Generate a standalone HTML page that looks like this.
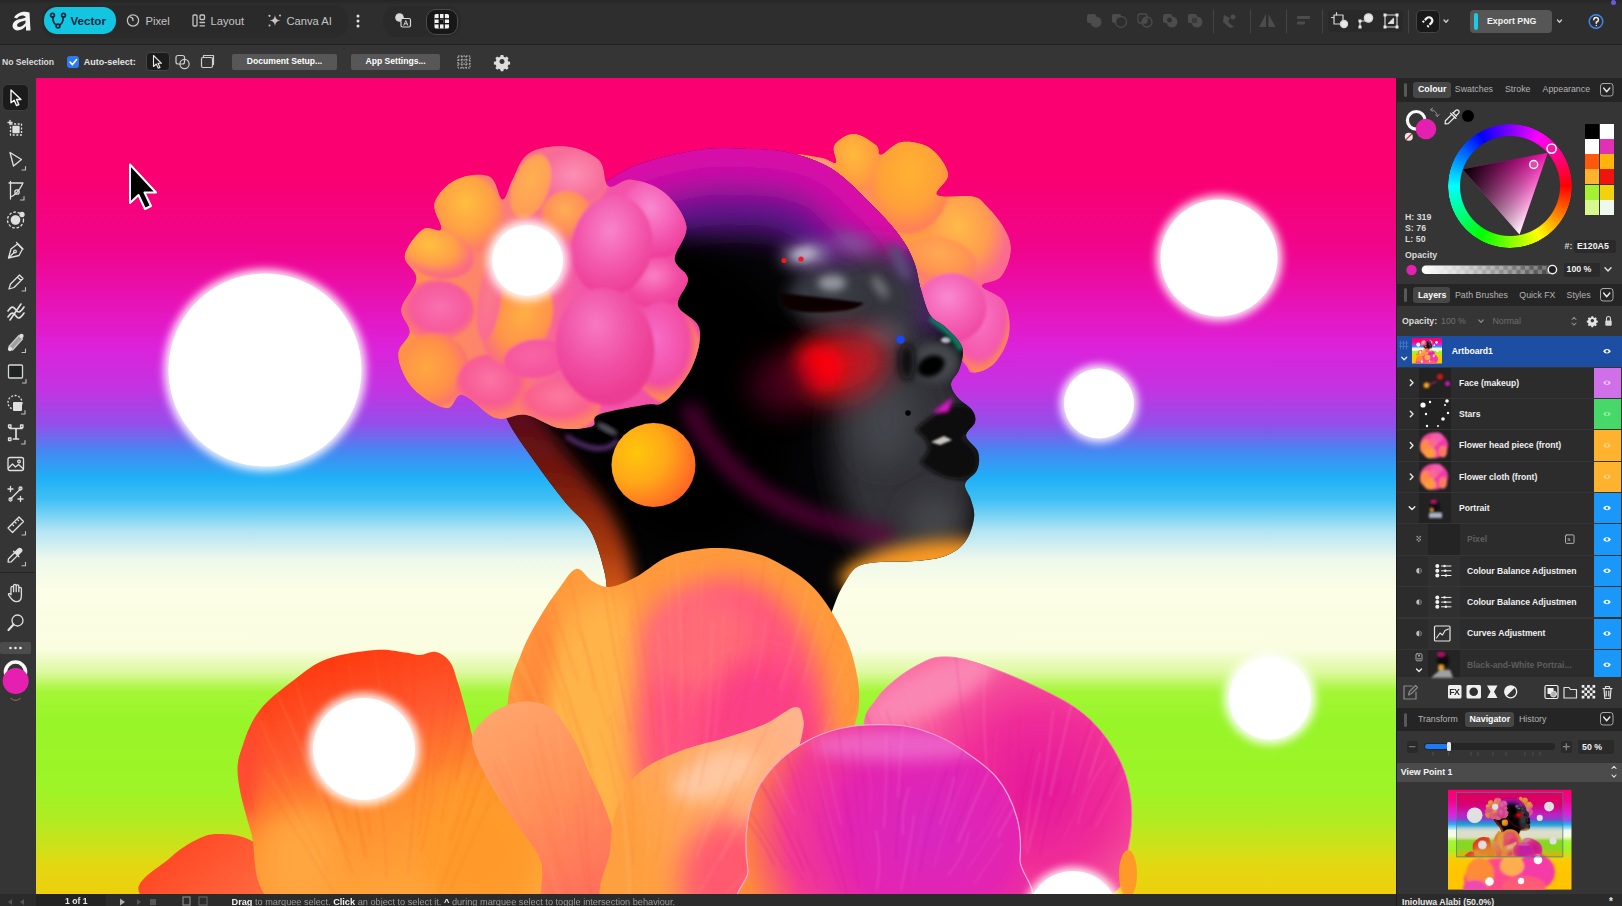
<!DOCTYPE html>
<html><head><meta charset="utf-8"><title>Affinity</title>
<style>
*{box-sizing:border-box}
html,body{margin:0;padding:0}
body{width:1622px;height:906px;overflow:hidden;position:relative;background:#343434;font-family:"Liberation Sans",sans-serif;color:#e6e6e6;font-size:9px}
.abs{position:absolute}
#art{position:absolute;left:0;top:0}
.bar1{position:absolute;left:0;top:0;width:1622px;height:45px;background:linear-gradient(#262626,#2e2e2e 5px);border-bottom:1px solid #1f1f1f}
.bar2{position:absolute;left:0;top:45px;width:1622px;height:33px;background:#353535}
.ltool{position:absolute;left:0;top:78px;width:36px;height:816px;background:#353535}
.rpanel{position:absolute;left:1396px;top:78px;width:226px;height:828px;background:#353535;border-left:1px solid #1c1c1c}
.status{position:absolute;left:0;top:894px;width:1396px;height:12px;background:#2b2b2b}
.t{position:absolute;white-space:nowrap;line-height:1}
.b{font-weight:bold}
.ph{position:absolute;left:0;width:226px;height:23px;background:#262626}
.tab{position:absolute;height:16px;border-radius:3px;background:#4a4a4a}
.grip{position:absolute;left:7px;width:3px;height:14px;background:#555;border-radius:1px}
.chev{position:absolute;left:203px;width:14px;height:13px;border:1px solid #9a9a9a;border-radius:3px}
.row{position:absolute;left:0;width:198px;height:30.4px;background:#2d2d2d}
.tag{position:absolute;left:198px;width:27px;height:30.4px}
.btn{position:absolute;background:#575757;border-radius:2px;color:#fff;font-weight:bold;font-size:8.6px;text-align:center}
.dk{position:absolute;background:#262626;border-radius:2px}

</style></head><body>
<svg id="art" width="1622" height="906" viewBox="0 0 1622 906">
<defs>
<clipPath id="cv"><rect x="36" y="78" width="1360" height="816"/></clipPath>
<linearGradient id="bg" x1="0" y1="78" x2="0" y2="894" gradientUnits="userSpaceOnUse">
<stop offset="0" stop-color="#fb0070"/><stop offset=".113" stop-color="#fb0070"/><stop offset=".21" stop-color="#f0058c"/>
<stop offset=".272" stop-color="#e812b4"/><stop offset=".33" stop-color="#dc22da"/><stop offset=".382" stop-color="#c234e2"/>
<stop offset=".425" stop-color="#9250ea"/><stop offset=".458" stop-color="#4488f2"/><stop offset=".49" stop-color="#20b0f6"/>
<stop offset=".517" stop-color="#40c0f4"/><stop offset=".554" stop-color="#b0e4f4"/><stop offset=".59" stop-color="#eef8ec"/>
<stop offset=".627" stop-color="#fcfee6"/><stop offset=".70" stop-color="#fafde0"/><stop offset=".728" stop-color="#ddf9a0"/>
<stop offset=".752" stop-color="#a4f636"/><stop offset=".79" stop-color="#98f528"/><stop offset=".8725" stop-color="#9ef426"/>
<stop offset=".909" stop-color="#b0ec22"/><stop offset=".94" stop-color="#cce21a"/><stop offset=".9645" stop-color="#e2d812"/><stop offset="1" stop-color="#eed00c"/>
</linearGradient>
<filter id="b05" filterUnits="userSpaceOnUse" x="0" y="500" width="1400" height="420"><feGaussianBlur stdDeviation="1"/></filter>
<filter id="b1" x="-20%" y="-20%" width="140%" height="140%"><feGaussianBlur stdDeviation="1"/></filter>
<filter id="b15" x="-20%" y="-20%" width="140%" height="140%"><feGaussianBlur stdDeviation="1.5"/></filter>
<filter id="b2" x="-20%" y="-20%" width="140%" height="140%"><feGaussianBlur stdDeviation="2"/></filter>
<filter id="b4" x="-60%" y="-60%" width="220%" height="220%"><feGaussianBlur stdDeviation="4"/></filter>
<filter id="b8" x="-120%" y="-120%" width="340%" height="340%"><feGaussianBlur stdDeviation="8"/></filter>
<filter id="b14" x="-150%" y="-150%" width="400%" height="400%"><feGaussianBlur stdDeviation="14"/></filter>
<filter id="u2" filterUnits="userSpaceOnUse" x="400" y="60" width="700" height="700"><feGaussianBlur stdDeviation="2"/></filter>
<filter id="u8" filterUnits="userSpaceOnUse" x="400" y="60" width="700" height="700"><feGaussianBlur stdDeviation="8"/></filter>
<filter id="u14" filterUnits="userSpaceOnUse" x="400" y="60" width="700" height="700"><feGaussianBlur stdDeviation="14"/></filter>
<radialGradient id="gPink" cx=".45" cy=".4" r=".65"><stop offset="0" stop-color="#f98ac8"/><stop offset=".55" stop-color="#f655ae"/><stop offset="1" stop-color="#f23c98"/></radialGradient>
<radialGradient id="gPink2" cx=".5" cy=".45" r=".6"><stop offset="0" stop-color="#f774c0"/><stop offset=".6" stop-color="#f34aa6"/><stop offset="1" stop-color="#fb6a7c"/></radialGradient>
<radialGradient id="gPinkO" cx=".4" cy=".35" r=".75"><stop offset="0" stop-color="#f66cbc"/><stop offset=".6" stop-color="#f650a0"/><stop offset="1" stop-color="#ff9440"/></radialGradient>
<radialGradient id="gOr" cx=".45" cy=".4" r=".7"><stop offset="0" stop-color="#ffb63a"/><stop offset=".6" stop-color="#ff9a48"/><stop offset="1" stop-color="#fb6c7a"/></radialGradient>
<radialGradient id="gOr2" cx=".4" cy=".4" r=".7"><stop offset="0" stop-color="#ffae34"/><stop offset=".7" stop-color="#ff9540"/><stop offset="1" stop-color="#ff7f5c"/></radialGradient>
<radialGradient id="gPeach" cx=".45" cy=".4" r=".7"><stop offset="0" stop-color="#ffa060"/><stop offset=".6" stop-color="#fc7e84"/><stop offset="1" stop-color="#f860a4"/></radialGradient>
<radialGradient id="gBall" cx=".3" cy=".35" r=".8"><stop offset="0" stop-color="#ffc60a"/><stop offset=".45" stop-color="#ffa818"/><stop offset="1" stop-color="#ff5a28"/></radialGradient>
<linearGradient id="gHeadTop" x1="760" y1="140" x2="700" y2="330" gradientUnits="userSpaceOnUse"><stop offset="0" stop-color="#d808a8"/><stop offset=".25" stop-color="#a00a98"/><stop offset=".55" stop-color="#3a0a50"/><stop offset=".8" stop-color="#08040c"/><stop offset="1" stop-color="#000"/></linearGradient>
<linearGradient id="gShoulder" x1="520" y1="700" x2="870" y2="700" gradientUnits="userSpaceOnUse"><stop offset="0" stop-color="#ff8c3c"/><stop offset=".18" stop-color="#ffae44"/><stop offset=".4" stop-color="#ff8060"/><stop offset=".6" stop-color="#ff5680"/><stop offset=".82" stop-color="#ff6a6c"/><stop offset="1" stop-color="#ff9a30"/></linearGradient>
<linearGradient id="gRedPetal" x1="360" y1="650" x2="440" y2="894" gradientUnits="userSpaceOnUse"><stop offset="0" stop-color="#ff3a10"/><stop offset=".3" stop-color="#ff5a30"/><stop offset=".6" stop-color="#ff9030"/><stop offset="1" stop-color="#ffa83c"/></linearGradient>
<linearGradient id="gSmallL" x1="200" y1="830" x2="260" y2="900" gradientUnits="userSpaceOnUse"><stop offset="0" stop-color="#ff4a26"/><stop offset="1" stop-color="#ff6a40"/></linearGradient>
<linearGradient id="gMidPetal" x1="500" y1="700" x2="620" y2="894" gradientUnits="userSpaceOnUse"><stop offset="0" stop-color="#ffa66c"/><stop offset=".5" stop-color="#ff8f58"/><stop offset="1" stop-color="#ff6c5c"/></linearGradient>
<linearGradient id="gPeachPetal" x1="620" y1="800" x2="800" y2="720" gradientUnits="userSpaceOnUse"><stop offset="0" stop-color="#ffa040"/><stop offset=".5" stop-color="#ffb070"/><stop offset="1" stop-color="#ffb48c"/></linearGradient>
<radialGradient id="gMag" cx="930" cy="830" r="190" gradientUnits="userSpaceOnUse"><stop offset="0" stop-color="#d826c0"/><stop offset=".45" stop-color="#e424b0"/><stop offset=".75" stop-color="#f43c90"/><stop offset="1" stop-color="#ff8a3c"/></radialGradient>
<radialGradient id="gBackPink" cx="1040" cy="790" r="150" gradientUnits="userSpaceOnUse"><stop offset="0" stop-color="#e4189c"/><stop offset=".5" stop-color="#f02c98"/><stop offset="1" stop-color="#fa6a9c"/></radialGradient>
<linearGradient id="gRF" x1="0" y1="134" x2="0" y2="375" gradientUnits="userSpaceOnUse"><stop offset="0" stop-color="#ffa838"/><stop offset=".55" stop-color="#ff9848"/><stop offset=".68" stop-color="#f668a8"/><stop offset="1" stop-color="#f65cb0"/></linearGradient>
<linearGradient id="gLF" x1="398" y1="0" x2="700" y2="0" gradientUnits="userSpaceOnUse"><stop offset="0" stop-color="#ff9a44"/><stop offset=".4" stop-color="#fb7a80"/><stop offset=".6" stop-color="#f458a8"/><stop offset="1" stop-color="#f24ca6"/></linearGradient>
<linearGradient id="gNeck" x1="0" y1="405" x2="0" y2="610" gradientUnits="userSpaceOnUse"><stop offset="0" stop-color="#5a0a20"/><stop offset=".35" stop-color="#7a1a0c"/><stop offset=".7" stop-color="#b03c10"/><stop offset="1" stop-color="#f06a1c"/></linearGradient>

</defs>
<g id="artg" clip-path="url(#cv)">
<rect x="36" y="78" width="1360" height="816" fill="url(#bg)"/>
<circle cx="265" cy="370" r="101.0" fill="#fff" filter="url(#b4)" opacity=".9"/><circle cx="265" cy="370" r="96.5" fill="#fff"/>
<circle cx="1219" cy="258" r="63.0" fill="#fff" filter="url(#b4)" opacity=".9"/><circle cx="1219" cy="258" r="58.5" fill="#fff"/>
<circle cx="1099" cy="403.5" r="39" fill="#fff" filter="url(#b4)" opacity=".9"/><circle cx="1099" cy="403.5" r="35" fill="#fff"/>
<circle cx="1270" cy="698.5" r="46" fill="#fff" filter="url(#b4)" opacity=".9"/><circle cx="1270" cy="698.5" r="41" fill="#fff"/>
<clipPath id="rfc"><path d="M796.0 158.0 C791.1 150.8 814.7 157.2 821.6 158.0 C828.6 158.9 833.8 165.1 836.0 162.8 C838.3 160.6 831.4 150.2 834.4 145.2 C837.5 140.2 846.4 134.0 853.6 134.0 C860.9 134.0 871.3 141.6 876.1 145.2 C880.8 148.8 876.4 155.4 880.9 154.8 C885.3 154.3 893.1 143.1 901.7 142.0 C910.3 140.9 922.4 142.9 930.5 148.4 C938.5 154.0 947.0 166.0 948.1 174.0 C949.2 182.1 932.7 191.0 936.9 194.9 C941.1 198.7 963.8 194.8 972.1 196.5 C980.4 198.1 979.4 198.9 984.9 204.5 C990.5 210.0 999.7 220.4 1004.1 228.5 C1008.6 236.5 1011.1 242.6 1010.5 250.9 C1010.0 259.2 1005.9 270.4 1000.9 276.5 C995.9 282.6 981.2 281.7 981.7 286.1 C982.3 290.6 999.4 293.8 1004.1 302.1 C1008.9 310.4 1010.6 323.6 1008.9 334.1 C1007.3 344.7 1000.9 356.3 994.5 363.0 C988.2 369.6 978.0 373.1 972.1 372.6 C966.3 372.0 973.4 372.3 960.9 359.8 C948.4 347.2 919.2 327.7 900.0 300.0 C880.8 272.3 868.0 224.6 850.0 200.0 C832.0 175.4 800.9 165.3 796.0 158.0Z"/></clipPath>
<path d="M796.0 158.0 C791.1 150.8 814.7 157.2 821.6 158.0 C828.6 158.9 833.8 165.1 836.0 162.8 C838.3 160.6 831.4 150.2 834.4 145.2 C837.5 140.2 846.4 134.0 853.6 134.0 C860.9 134.0 871.3 141.6 876.1 145.2 C880.8 148.8 876.4 155.4 880.9 154.8 C885.3 154.3 893.1 143.1 901.7 142.0 C910.3 140.9 922.4 142.9 930.5 148.4 C938.5 154.0 947.0 166.0 948.1 174.0 C949.2 182.1 932.7 191.0 936.9 194.9 C941.1 198.7 963.8 194.8 972.1 196.5 C980.4 198.1 979.4 198.9 984.9 204.5 C990.5 210.0 999.7 220.4 1004.1 228.5 C1008.6 236.5 1011.1 242.6 1010.5 250.9 C1010.0 259.2 1005.9 270.4 1000.9 276.5 C995.9 282.6 981.2 281.7 981.7 286.1 C982.3 290.6 999.4 293.8 1004.1 302.1 C1008.9 310.4 1010.6 323.6 1008.9 334.1 C1007.3 344.7 1000.9 356.3 994.5 363.0 C988.2 369.6 978.0 373.1 972.1 372.6 C966.3 372.0 973.4 372.3 960.9 359.8 C948.4 347.2 919.2 327.7 900.0 300.0 C880.8 272.3 868.0 224.6 850.0 200.0 C832.0 175.4 800.9 165.3 796.0 158.0Z" fill="url(#gRF)"/>
<g clip-path="url(#rfc)"><g filter="url(#b15)">
<radialGradient id="pg1" cx="0.45" cy="0.4" r=".62"><stop offset="0" stop-color="#ffa47c"/><stop offset="1" stop-color="#ff8e70"/></radialGradient>
<ellipse cx="820.0" cy="170.8" rx="27.2" ry="14.1" fill="url(#pg1)" transform="rotate(-10 820.0 170.8)"/>
<radialGradient id="pg2" cx="0.45" cy="0.35" r=".62"><stop offset="0" stop-color="#ffba3a"/><stop offset="0.6" stop-color="#ffa23e"/><stop offset="1" stop-color="#ff8850"/></radialGradient>
<ellipse cx="857.5" cy="163.8" rx="25.0" ry="32.0" fill="url(#pg2)" transform="rotate(-8 857.5 163.8)"/>
<radialGradient id="pg3" cx="0.45" cy="0.4" r=".62"><stop offset="0" stop-color="#ff9a58"/><stop offset="1" stop-color="#ff8460"/></radialGradient>
<ellipse cx="876.1" cy="215.7" rx="16.0" ry="28.8" fill="url(#pg3)" transform="rotate(-25 876.1 215.7)"/>
<radialGradient id="pg4" cx="0.4" cy="0.35" r=".62"><stop offset="0" stop-color="#f874c2"/><stop offset="0.74" stop-color="#f558ac"/><stop offset="1" stop-color="#ff9040"/></radialGradient>
<ellipse cx="984.9" cy="330.9" rx="26.3" ry="44.2" fill="url(#pg4)" transform="rotate(5 984.9 330.9)"/>
<radialGradient id="pg5" cx="0.4" cy="0.3" r=".62"><stop offset="0" stop-color="#ffba48"/><stop offset="0.6" stop-color="#ff9c50"/><stop offset="1" stop-color="#fb6a90"/></radialGradient>
<ellipse cx="972.1" cy="241.3" rx="39.7" ry="47.4" fill="url(#pg5)" transform="rotate(-20 972.1 241.3)"/>
<radialGradient id="pg6" cx="0.45" cy="0.35" r=".62"><stop offset="0" stop-color="#ffb232"/><stop offset="0.6" stop-color="#ffa238"/><stop offset="1" stop-color="#ff8058"/></radialGradient>
<ellipse cx="910.6" cy="186.8" rx="39.1" ry="47.4" fill="url(#pg6)" transform="rotate(12 910.6 186.8)"/>
<radialGradient id="pg7" cx="0.45" cy="0.35" r=".62"><stop offset="0" stop-color="#ffaa52"/><stop offset="0.6" stop-color="#ff9650"/><stop offset="1" stop-color="#fc7a70"/></radialGradient>
<ellipse cx="941.7" cy="261.1" rx="35.2" ry="23.1" fill="url(#pg7)" transform="rotate(12 941.7 261.1)"/>
<radialGradient id="pg8" cx="0.45" cy="0.35" r=".62"><stop offset="0" stop-color="#f98ad0"/><stop offset="0.6" stop-color="#f560b4"/><stop offset="1" stop-color="#f04aa4"/></radialGradient>
<ellipse cx="951.3" cy="307.9" rx="35.2" ry="34.6" fill="url(#pg8)" transform="rotate(0 951.3 307.9)"/>
</g></g>
<path id="head" d="M600.0 186.0 C614.7 176.6 622.7 170.2 640.0 164.0 C657.3 157.8 681.5 152.6 700.0 150.0 C718.5 147.4 731.4 148.5 747.0 149.0 C762.6 149.5 775.3 149.5 790.0 153.0 C804.7 156.5 818.3 160.5 832.0 169.0 C845.7 177.5 857.4 190.6 869.0 202.0 C880.6 213.4 891.2 224.6 899.0 235.0 C906.8 245.4 910.2 252.5 914.0 262.0 C917.8 271.5 918.2 280.8 921.0 290.0 C923.8 299.2 926.0 308.8 930.0 315.0 C934.0 321.2 939.1 321.7 944.0 326.0 C948.9 330.3 954.7 335.5 958.0 340.0 C961.3 344.5 962.8 346.8 963.0 352.0 C963.2 357.2 961.1 364.5 959.0 370.0 C956.9 375.5 951.2 379.1 951.0 384.0 C950.8 388.9 954.4 393.5 958.0 398.0 C961.6 402.5 969.1 405.8 972.0 410.0 C974.9 414.2 976.0 417.5 975.0 422.0 C974.0 426.5 965.5 430.8 966.0 436.0 C966.5 441.2 976.1 446.1 978.0 452.0 C979.9 457.9 979.3 464.5 977.0 470.0 C974.7 475.5 966.0 478.8 965.0 484.0 C964.0 489.2 969.4 494.1 971.0 500.0 C972.6 505.9 975.0 510.7 974.0 518.0 C973.0 525.3 970.0 535.4 965.0 542.0 C960.0 548.6 953.7 552.7 945.0 556.0 C936.3 559.3 926.3 560.0 915.0 561.0 C903.7 562.0 890.1 561.0 880.0 562.0 C869.9 563.0 863.2 563.2 857.0 567.0 C850.8 570.8 847.8 577.8 844.0 584.0 C840.2 590.2 838.1 595.0 835.0 603.0 C831.9 611.0 829.5 618.4 826.0 630.0 C822.5 641.6 836.8 659.6 815.0 670.0 C793.2 680.4 734.7 693.5 700.0 690.0 C665.3 686.5 630.9 665.6 615.0 650.0 C599.1 634.4 609.9 613.9 608.0 600.0 C606.1 586.1 607.1 582.1 604.0 570.0 C600.9 557.9 596.8 541.8 590.0 530.0 C583.2 518.2 574.5 513.8 565.0 502.0 C555.5 490.2 545.2 476.7 535.0 462.0 C524.8 447.3 513.3 432.9 506.0 417.0 C498.7 401.1 494.6 388.5 493.0 370.0 C491.4 351.5 492.3 328.7 497.0 310.0 C501.7 291.3 509.9 277.9 520.0 262.0 C530.1 246.1 541.1 231.2 555.0 218.0 C568.9 204.8 585.3 195.4 600.0 186.0Z" fill="#040406"/>
<clipPath id="headc"><path d="M600.0 186.0 C614.7 176.6 622.7 170.2 640.0 164.0 C657.3 157.8 681.5 152.6 700.0 150.0 C718.5 147.4 731.4 148.5 747.0 149.0 C762.6 149.5 775.3 149.5 790.0 153.0 C804.7 156.5 818.3 160.5 832.0 169.0 C845.7 177.5 857.4 190.6 869.0 202.0 C880.6 213.4 891.2 224.6 899.0 235.0 C906.8 245.4 910.2 252.5 914.0 262.0 C917.8 271.5 918.2 280.8 921.0 290.0 C923.8 299.2 926.0 308.8 930.0 315.0 C934.0 321.2 939.1 321.7 944.0 326.0 C948.9 330.3 954.7 335.5 958.0 340.0 C961.3 344.5 962.8 346.8 963.0 352.0 C963.2 357.2 961.1 364.5 959.0 370.0 C956.9 375.5 951.2 379.1 951.0 384.0 C950.8 388.9 954.4 393.5 958.0 398.0 C961.6 402.5 969.1 405.8 972.0 410.0 C974.9 414.2 976.0 417.5 975.0 422.0 C974.0 426.5 965.5 430.8 966.0 436.0 C966.5 441.2 976.1 446.1 978.0 452.0 C979.9 457.9 979.3 464.5 977.0 470.0 C974.7 475.5 966.0 478.8 965.0 484.0 C964.0 489.2 969.4 494.1 971.0 500.0 C972.6 505.9 975.0 510.7 974.0 518.0 C973.0 525.3 970.0 535.4 965.0 542.0 C960.0 548.6 953.7 552.7 945.0 556.0 C936.3 559.3 926.3 560.0 915.0 561.0 C903.7 562.0 890.1 561.0 880.0 562.0 C869.9 563.0 863.2 563.2 857.0 567.0 C850.8 570.8 847.8 577.8 844.0 584.0 C840.2 590.2 838.1 595.0 835.0 603.0 C831.9 611.0 829.5 618.4 826.0 630.0 C822.5 641.6 836.8 659.6 815.0 670.0 C793.2 680.4 734.7 693.5 700.0 690.0 C665.3 686.5 630.9 665.6 615.0 650.0 C599.1 634.4 609.9 613.9 608.0 600.0 C606.1 586.1 607.1 582.1 604.0 570.0 C600.9 557.9 596.8 541.8 590.0 530.0 C583.2 518.2 574.5 513.8 565.0 502.0 C555.5 490.2 545.2 476.7 535.0 462.0 C524.8 447.3 513.3 432.9 506.0 417.0 C498.7 401.1 494.6 388.5 493.0 370.0 C491.4 351.5 492.3 328.7 497.0 310.0 C501.7 291.3 509.9 277.9 520.0 262.0 C530.1 246.1 541.1 231.2 555.0 218.0 C568.9 204.8 585.3 195.4 600.0 186.0Z"/></clipPath>
<g clip-path="url(#headc)">
<path d="M540.0 240.0 C550.4 230.6 582.7 199.2 600.0 186.0 C617.3 172.8 622.7 170.2 640.0 164.0 C657.3 157.8 681.5 152.6 700.0 150.0 C718.5 147.4 731.4 148.5 747.0 149.0 C762.6 149.5 775.3 149.5 790.0 153.0 C804.7 156.5 818.3 160.5 832.0 169.0 C845.7 177.5 858.4 191.8 869.0 202.0 C879.6 212.2 886.6 219.7 893.0 228.0 C899.4 236.3 903.7 246.2 906.0 250.0" stroke="#5a1488" stroke-width="170" fill="none" filter="url(#u14)" stroke-linecap="round"/>
<path d="M540.0 240.0 C550.4 230.6 582.7 199.2 600.0 186.0 C617.3 172.8 622.7 170.2 640.0 164.0 C657.3 157.8 681.5 152.6 700.0 150.0 C718.5 147.4 731.4 148.5 747.0 149.0 C762.6 149.5 775.3 149.5 790.0 153.0 C804.7 156.5 818.3 160.5 832.0 169.0 C845.7 177.5 858.4 191.8 869.0 202.0 C879.6 212.2 886.6 219.7 893.0 228.0 C899.4 236.3 903.7 246.2 906.0 250.0" stroke="#c20ea4" stroke-width="92" fill="none" filter="url(#u14)" stroke-linecap="butt"/>
<path d="M540.0 240.0 C550.4 230.6 582.7 199.2 600.0 186.0 C617.3 172.8 622.7 170.2 640.0 164.0 C657.3 157.8 681.5 152.6 700.0 150.0 C718.5 147.4 731.4 148.5 747.0 149.0 C762.6 149.5 775.3 149.5 790.0 153.0 C804.7 156.5 818.3 160.5 832.0 169.0 C845.7 177.5 858.4 191.8 869.0 202.0 C879.6 212.2 886.6 219.7 893.0 228.0 C899.4 236.3 903.7 246.2 906.0 250.0" stroke="#d810a8" stroke-width="36" fill="none" filter="url(#u8)" stroke-linecap="butt"/>
<ellipse cx="660" cy="330" rx="150" ry="90" fill="#000" filter="url(#b14)" transform="rotate(25 660 330)"/>
<ellipse cx="560" cy="300" rx="80" ry="90" fill="#000" filter="url(#b14)"/>
<ellipse cx="905" cy="450" rx="72" ry="130" fill="#303238" filter="url(#b14)" transform="rotate(-6 905 450)"/>
<ellipse cx="870" cy="300" rx="58" ry="50" fill="#34363e" filter="url(#b14)"/><ellipse cx="825" cy="296" rx="36" ry="26" fill="#393b43" filter="url(#b8)"/>
<ellipse cx="806" cy="255" rx="24" ry="10" fill="#9a92ae" filter="url(#b8)" transform="rotate(-8 806 255)"/><ellipse cx="804" cy="254" rx="12" ry="5" fill="#c0b8d0" filter="url(#b4)" transform="rotate(-8 804 254)"/><ellipse cx="852" cy="243" rx="22" ry="8" fill="#8258a0" filter="url(#b8)" transform="rotate(12 852 243)"/>
<ellipse cx="880" cy="287" rx="5" ry="13" fill="#74767e" filter="url(#b4)" transform="rotate(-35 880 287)"/><ellipse cx="900" cy="262" rx="7" ry="20" fill="#5a4a78" filter="url(#b4)" transform="rotate(-25 900 262)"/>
<ellipse cx="832" cy="283" rx="14" ry="8" fill="#9496a0" filter="url(#b4)"/>
<ellipse cx="885" cy="335" rx="22" ry="14" fill="#4e5058" filter="url(#b8)"/>
<ellipse cx="885" cy="420" rx="30" ry="45" fill="#43454b" filter="url(#b14)"/>
<ellipse cx="935" cy="520" rx="26" ry="22" fill="#46484e" filter="url(#b14)"/>
<ellipse cx="690" cy="420" rx="100" ry="130" fill="#000" filter="url(#b14)"/>
<path d="M782 295 C795 296 830 300 860 304 C850 311 810 313 790 308 C785 305 782 300 782 295Z" fill="#0c0006" stroke="#0c0006" stroke-width="3" filter="url(#b1)"/>
<ellipse cx="838" cy="366" rx="52" ry="34" fill="#d81420" filter="url(#b14)" opacity=".85" transform="rotate(-15 838 366)"/>
<ellipse cx="820" cy="367" rx="24" ry="22" fill="#ff0008" filter="url(#b8)"/>
<ellipse cx="780" cy="385" rx="30" ry="30" fill="#50001c" filter="url(#b14)" opacity=".8"/>
<ellipse cx="936" cy="362" rx="24" ry="20" fill="#45474e" filter="url(#b4)"/><ellipse cx="931" cy="366" rx="14" ry="10" fill="#010102" filter="url(#b2)" transform="rotate(-25 931 366)"/>
<ellipse cx="907" cy="362" rx="8" ry="18" fill="#08080c" filter="url(#b4)"/>
<ellipse cx="946" cy="340" rx="5" ry="3" fill="#b8bac0" filter="url(#b1)"/>
<path d="M931 317 C942 326 955 334 962 350" stroke="#0a7a5e" stroke-width="8" fill="none" filter="url(#u2)"/>
<path d="M915 430 C935 412 955 398 972 408 C982 418 975 432 962 438 C975 446 984 460 974 474 C960 486 935 476 920 462 C930 452 935 444 915 430Z" fill="#0c0c10" filter="url(#b2)"/>
<path d="M932 413 L953 397 L948 412Z" fill="#e614d0" filter="url(#b2)"/>
<path d="M931 442 L944 436 L952 440 L940 445Z" fill="#c8c4c0" filter="url(#b1)"/>
<path d="M688 405 C703 440 730 470 760 492 C800 518 850 530 892 536" stroke="#62053c" stroke-width="18" fill="none" filter="url(#u8)" opacity=".8"/><path d="M566 436 C590 452 608 452 618 440" stroke="#6a3a88" stroke-width="5" fill="none" filter="url(#u2)" opacity=".8"/><ellipse cx="607" cy="429" rx="12" ry="3.500" fill="#55555f" filter="url(#b2)" transform="rotate(28 607 429)"/>
<ellipse cx="925" cy="568" rx="86" ry="26" fill="#f89820" filter="url(#b8)" transform="rotate(-8 925 568)"/>
<path d="M500 405 C515 440 540 470 565 502 C590 530 604 565 606 610" stroke="url(#gNeck)" stroke-width="62" fill="none" filter="url(#u8)" opacity=".95"/>

</g>
<circle cx="784" cy="260.5" r="2.6" fill="#f01818"/><circle cx="801" cy="259" r="2.6" fill="#f01818"/>
<circle cx="900.5" cy="339.5" r="4.2" fill="#1848f0"/><circle cx="908" cy="413" r="2.8" fill="#000"/>
<circle cx="653.5" cy="465" r="42" fill="url(#gBall)"/>
<clipPath id="lfc"><path d="M529.0 153.2 C538.2 147.4 553.4 145.4 565.4 146.6 C577.5 147.7 591.1 152.9 598.5 159.8 C606.0 166.7 602.7 182.8 608.5 186.3 C614.2 189.7 621.9 178.5 631.7 179.7 C641.4 180.8 655.3 184.9 664.8 192.9 C674.2 200.9 684.6 214.5 686.3 226.0 C688.0 237.5 674.4 250.0 674.7 259.1 C675.0 268.3 687.4 271.0 687.9 279.0 C688.5 287.0 676.0 296.9 678.0 305.5 C680.0 314.1 697.2 317.8 699.5 328.7 C701.8 339.6 697.3 355.8 691.3 368.4 C685.2 381.0 672.8 395.2 664.8 401.5 C656.7 407.8 656.4 402.5 644.9 404.8 C633.4 407.1 607.7 411.0 598.5 414.8 C589.4 418.5 598.8 424.1 591.9 426.4 C585.0 428.7 570.3 430.0 558.8 428.0 C547.3 426.0 536.6 416.5 525.7 414.8 C514.8 413.0 506.8 421.5 495.9 418.1 C485.0 414.6 471.4 396.6 462.8 394.9 C454.2 393.2 454.8 409.3 446.2 408.1 C437.6 407.0 421.4 397.5 413.1 388.3 C404.8 379.1 398.8 364.9 398.2 355.2 C397.6 345.4 409.2 340.0 409.8 332.0 C410.4 324.0 400.4 318.0 401.5 308.8 C402.7 299.6 415.8 288.2 416.4 279.0 C417.0 269.8 403.7 264.4 404.8 255.8 C406.0 247.2 416.7 233.9 423.0 229.3 C429.4 224.7 439.2 233.9 441.3 229.3 C443.3 224.7 432.1 211.5 434.6 202.8 C437.2 194.2 446.7 184.3 456.2 179.7 C465.6 175.1 481.2 172.9 489.3 176.4 C497.3 179.8 498.5 199.0 502.5 199.5 C506.5 200.1 507.9 187.7 512.5 179.7 C517.0 171.6 519.8 158.9 529.0 153.2Z"/></clipPath>
<path d="M529.0 153.2 C538.2 147.4 553.4 145.4 565.4 146.6 C577.5 147.7 591.1 152.9 598.5 159.8 C606.0 166.7 602.7 182.8 608.5 186.3 C614.2 189.7 621.9 178.5 631.7 179.7 C641.4 180.8 655.3 184.9 664.8 192.9 C674.2 200.9 684.6 214.5 686.3 226.0 C688.0 237.5 674.4 250.0 674.7 259.1 C675.0 268.3 687.4 271.0 687.9 279.0 C688.5 287.0 676.0 296.9 678.0 305.5 C680.0 314.1 697.2 317.8 699.5 328.7 C701.8 339.6 697.3 355.8 691.3 368.4 C685.2 381.0 672.8 395.2 664.8 401.5 C656.7 407.8 656.4 402.5 644.9 404.8 C633.4 407.1 607.7 411.0 598.5 414.8 C589.4 418.5 598.8 424.1 591.9 426.4 C585.0 428.7 570.3 430.0 558.8 428.0 C547.3 426.0 536.6 416.5 525.7 414.8 C514.8 413.0 506.8 421.5 495.9 418.1 C485.0 414.6 471.4 396.6 462.8 394.9 C454.2 393.2 454.8 409.3 446.2 408.1 C437.6 407.0 421.4 397.5 413.1 388.3 C404.8 379.1 398.8 364.9 398.2 355.2 C397.6 345.4 409.2 340.0 409.8 332.0 C410.4 324.0 400.4 318.0 401.5 308.8 C402.7 299.6 415.8 288.2 416.4 279.0 C417.0 269.8 403.7 264.4 404.8 255.8 C406.0 247.2 416.7 233.9 423.0 229.3 C429.4 224.7 439.2 233.9 441.3 229.3 C443.3 224.7 432.1 211.5 434.6 202.8 C437.2 194.2 446.7 184.3 456.2 179.7 C465.6 175.1 481.2 172.9 489.3 176.4 C497.3 179.8 498.5 199.0 502.5 199.5 C506.5 200.1 507.9 187.7 512.5 179.7 C517.0 171.6 519.8 158.9 529.0 153.2Z" fill="url(#gLF)"/>
<g clip-path="url(#lfc)"><g filter="url(#b15)">
<radialGradient id="pg9" cx="0.6" cy="0.45" r=".62"><stop offset="0" stop-color="#fb90b4"/><stop offset="0.6" stop-color="#f86a98"/><stop offset="1" stop-color="#fb7a80"/></radialGradient>
<ellipse cx="565.4" cy="179.7" rx="44.7" ry="34.8" fill="url(#pg9)" transform="rotate(-10 565.4 179.7)"/>
<radialGradient id="pg10" cx="0.45" cy="0.4" r=".62"><stop offset="0" stop-color="#ffb050"/><stop offset="1" stop-color="#ff9a58"/></radialGradient>
<ellipse cx="530.7" cy="186.3" rx="18.2" ry="33.1" fill="url(#pg10)" transform="rotate(20 530.7 186.3)"/>
<radialGradient id="pg11" cx="0.5" cy="0.35" r=".62"><stop offset="0" stop-color="#ffbe40"/><stop offset="0.6" stop-color="#ffa044"/><stop offset="1" stop-color="#fd7a6c"/></radialGradient>
<ellipse cx="467.7" cy="214.4" rx="34.8" ry="39.1" fill="url(#pg11)" transform="rotate(-10 467.7 214.4)"/>
<radialGradient id="pg12" cx="0.35" cy="0.35" r=".62"><stop offset="0" stop-color="#ffc040"/><stop offset="0.6" stop-color="#ffa048"/><stop offset="1" stop-color="#fb6a84"/></radialGradient>
<ellipse cx="437.9" cy="254.2" rx="36.4" ry="23.8" fill="url(#pg12)" transform="rotate(15 437.9 254.2)"/>
<radialGradient id="pg13" cx="0.55" cy="0.45" r=".62"><stop offset="0" stop-color="#f970b0"/><stop offset="0.6" stop-color="#f75a9c"/><stop offset="1" stop-color="#ff8a58"/></radialGradient>
<ellipse cx="436.3" cy="310.5" rx="38.1" ry="30.5" fill="url(#pg13)" transform="rotate(0 436.3 310.5)"/>
<radialGradient id="pg14" cx="0.4" cy="0.5" r=".62"><stop offset="0" stop-color="#ffa840"/><stop offset="0.6" stop-color="#ff9048"/><stop offset="1" stop-color="#fb6a7c"/></radialGradient>
<ellipse cx="433.0" cy="370.1" rx="36.4" ry="37.1" fill="url(#pg14)" transform="rotate(20 433.0 370.1)"/>
<radialGradient id="pg15" cx="0.45" cy="0.4" r=".62"><stop offset="0" stop-color="#fa74a4"/><stop offset="0.6" stop-color="#f85a94"/><stop offset="1" stop-color="#ff8a58"/></radialGradient>
<ellipse cx="492.6" cy="386.6" rx="37.1" ry="31.8" fill="url(#pg15)" transform="rotate(10 492.6 386.6)"/>
<radialGradient id="pg16" cx="0.5" cy="0.3" r=".62"><stop offset="0" stop-color="#fb78a0"/><stop offset="0.6" stop-color="#f9608c"/><stop offset="1" stop-color="#ff8a5c"/></radialGradient>
<ellipse cx="558.8" cy="406.5" rx="41.4" ry="25.8" fill="url(#pg16)" transform="rotate(0 558.8 406.5)"/>
<radialGradient id="pg17" cx="0.5" cy="0.35" r=".62"><stop offset="0" stop-color="#f98ad2"/><stop offset="0.6" stop-color="#f458b0"/><stop offset="1" stop-color="#ee3c9a"/></radialGradient>
<ellipse cx="654.8" cy="219.4" rx="35.8" ry="40.4" fill="url(#pg17)" transform="rotate(-20 654.8 219.4)"/>
<radialGradient id="pg18" cx="0.45" cy="0.35" r=".62"><stop offset="0" stop-color="#f980c4"/><stop offset="0.6" stop-color="#f24ea4"/><stop offset="1" stop-color="#ee3c98"/></radialGradient>
<ellipse cx="658.1" cy="283.0" rx="32.5" ry="25.8" fill="url(#pg18)" transform="rotate(-10 658.1 283.0)"/>
<radialGradient id="pg19" cx="0.4" cy="0.35" r=".62"><stop offset="0" stop-color="#f66cc8"/><stop offset="0.72" stop-color="#f24ca2"/><stop offset="1" stop-color="#ff9440"/></radialGradient>
<ellipse cx="665.4" cy="352.5" rx="35.8" ry="50.3" fill="url(#pg19)" transform="rotate(-8 665.4 352.5)"/>
<radialGradient id="pg20" cx="0.5" cy="0.35" r=".62"><stop offset="0" stop-color="#ffae54"/><stop offset="0.6" stop-color="#ff9058"/><stop offset="1" stop-color="#fb6a88"/></radialGradient>
<ellipse cx="567.1" cy="216.8" rx="25.8" ry="25.8" fill="url(#pg20)" transform="rotate(-20 567.1 216.8)"/>
<radialGradient id="pg21" cx="0.55" cy="0.4" r=".62"><stop offset="0" stop-color="#ffb044"/><stop offset="0.6" stop-color="#ff9448"/><stop offset="1" stop-color="#fa6a84"/></radialGradient>
<ellipse cx="517.4" cy="320.4" rx="33.1" ry="46.4" fill="url(#pg21)" transform="rotate(25 517.4 320.4)"/>
<radialGradient id="pg22" cx="0.45" cy="0.4" r=".62"><stop offset="0" stop-color="#fb7a8c"/><stop offset="1" stop-color="#fa6a90"/></radialGradient>
<ellipse cx="489.3" cy="302.2" rx="11.3" ry="38.1" fill="url(#pg22)" transform="rotate(8 489.3 302.2)"/>
<radialGradient id="pg23" cx="0.45" cy="0.4" r=".62"><stop offset="0" stop-color="#f964a4"/><stop offset="1" stop-color="#f4509c"/></radialGradient>
<ellipse cx="535.6" cy="358.5" rx="31.5" ry="19.2" fill="url(#pg23)" transform="rotate(-5 535.6 358.5)"/>
<radialGradient id="pg24" cx="0.45" cy="0.35" r=".62"><stop offset="0" stop-color="#f884ca"/><stop offset="0.6" stop-color="#f358ac"/><stop offset="1" stop-color="#ee4098"/></radialGradient>
<ellipse cx="611.8" cy="245.9" rx="40.4" ry="50.3" fill="url(#pg24)" transform="rotate(10 611.8 245.9)"/>
<radialGradient id="pg25" cx="0.45" cy="0.3" r=".62"><stop offset="0" stop-color="#f778c0"/><stop offset="0.6" stop-color="#f150a4"/><stop offset="1" stop-color="#ec3c94"/></radialGradient>
<ellipse cx="605.2" cy="346.9" rx="49.0" ry="58.9" fill="url(#pg25)" transform="rotate(-10 605.2 346.9)"/>
</g></g>
<circle cx="527.5" cy="260.5" r="40.5" fill="#fff" filter="url(#b4)" opacity=".9"/><circle cx="527.5" cy="260.5" r="35.5" fill="#fff"/>
<clipPath id="bpc"><path d="M864.0 727.0 C865.0 709.7 870.8 708.0 876.0 700.0 C881.2 692.0 886.7 687.1 894.0 681.0 C901.3 674.9 909.7 669.2 918.0 665.0 C926.3 660.8 931.8 657.3 942.0 657.0 C952.2 656.7 960.5 657.8 977.0 663.0 C993.5 668.2 1018.3 678.0 1037.0 687.0 C1055.7 696.0 1071.1 703.2 1085.0 715.0 C1098.9 726.8 1109.0 740.3 1117.0 755.0 C1125.0 769.7 1129.1 783.5 1131.0 800.0 C1132.9 816.5 1131.3 833.7 1128.0 850.0 C1124.7 866.3 1134.2 878.4 1112.0 894.0 C1089.8 909.6 1036.7 939.0 1000.0 940.0 C963.3 941.0 922.5 924.3 900.0 900.0 C877.5 875.7 876.2 830.0 870.0 800.0 C863.8 770.0 863.0 744.3 864.0 727.0Z"/></clipPath>
<path d="M864.0 727.0 C865.0 709.7 870.8 708.0 876.0 700.0 C881.2 692.0 886.7 687.1 894.0 681.0 C901.3 674.9 909.7 669.2 918.0 665.0 C926.3 660.8 931.8 657.3 942.0 657.0 C952.2 656.7 960.5 657.8 977.0 663.0 C993.5 668.2 1018.3 678.0 1037.0 687.0 C1055.7 696.0 1071.1 703.2 1085.0 715.0 C1098.9 726.8 1109.0 740.3 1117.0 755.0 C1125.0 769.7 1129.1 783.5 1131.0 800.0 C1132.9 816.5 1131.3 833.7 1128.0 850.0 C1124.7 866.3 1134.2 878.4 1112.0 894.0 C1089.8 909.6 1036.7 939.0 1000.0 940.0 C963.3 941.0 922.5 924.3 900.0 900.0 C877.5 875.7 876.2 830.0 870.0 800.0 C863.8 770.0 863.0 744.3 864.0 727.0Z" fill="url(#gBackPink)" stroke="#f87ab0" stroke-width="1"/>
<g clip-path="url(#bpc)"><ellipse cx="930" cy="690" rx="70" ry="22" fill="#fa86b4" filter="url(#b8)" transform="rotate(-25 930 690)"/></g>
<g clip-path="url(#bpc)" fill="none" stroke-linecap="round" filter="url(#b05)">
<path d="M931 878 Q895 826 868 768" stroke="#d01484" stroke-width="1.1" opacity="0.13"/>
<path d="M942 889 Q913 847 894 798" stroke="#d01484" stroke-width="1.2" opacity="0.24"/>
<path d="M933 866 Q911 808 878 755" stroke="#d01484" stroke-width="1.1" opacity="0.26"/>
<path d="M902 788 Q879 751 865 710" stroke="#d01484" stroke-width="1.1" opacity="0.23"/>
<path d="M923 819 Q897 762 874 704" stroke="#d01484" stroke-width="0.8" opacity="0.13"/>
<path d="M923 805 Q902 758 886 710" stroke="#d01484" stroke-width="1.2" opacity="0.16"/>
<path d="M931 799 Q919 760 905 722" stroke="#d01484" stroke-width="1.6" opacity="0.22"/>
<path d="M923 763 Q912 731 902 698" stroke="#fca0c8" stroke-width="0.9" opacity="0.19"/>
<path d="M940 800 Q922 734 901 667" stroke="#fca0c8" stroke-width="1.1" opacity="0.22"/>
<path d="M952 809 Q943 757 926 708" stroke="#fca0c8" stroke-width="1.2" opacity="0.21"/>
<path d="M951 793 Q944 730 922 670" stroke="#fca0c8" stroke-width="1.0" opacity="0.17"/>
<path d="M977 879 Q963 828 957 775" stroke="#d01484" stroke-width="0.8" opacity="0.23"/>
<path d="M974 850 Q971 800 957 753" stroke="#d01484" stroke-width="1.2" opacity="0.20"/>
<path d="M972 774 Q959 700 953 625" stroke="#d01484" stroke-width="1.1" opacity="0.24"/>
<path d="M987 861 Q980 824 980 787" stroke="#d01484" stroke-width="1.2" opacity="0.20"/>
<path d="M990 880 Q984 830 982 779" stroke="#d01484" stroke-width="1.7" opacity="0.22"/>
<path d="M991 799 Q981 734 985 669" stroke="#fca0c8" stroke-width="1.5" opacity="0.24"/>
<path d="M998 828 Q992 779 997 729" stroke="#fca0c8" stroke-width="0.8" opacity="0.13"/>
<path d="M1001 859 Q995 812 1001 766" stroke="#d01484" stroke-width="0.9" opacity="0.13"/>
<path d="M1005 877 Q1009 801 1010 726" stroke="#d01484" stroke-width="1.0" opacity="0.17"/>
<path d="M1009 864 Q1021 791 1019 716" stroke="#d01484" stroke-width="1.2" opacity="0.13"/>
<path d="M1015 835 Q1023 794 1022 752" stroke="#d01484" stroke-width="0.8" opacity="0.25"/>
<path d="M1018 862 Q1019 804 1033 748" stroke="#d01484" stroke-width="1.7" opacity="0.24"/>
<path d="M1025 848 Q1028 800 1040 753" stroke="#fca0c8" stroke-width="1.3" opacity="0.23"/>
<path d="M1027 853 Q1047 783 1053 711" stroke="#fca0c8" stroke-width="1.6" opacity="0.23"/>
<path d="M1033 854 Q1043 799 1057 744" stroke="#d01484" stroke-width="0.8" opacity="0.16"/>
<path d="M1050 795 Q1068 717 1088 639" stroke="#fca0c8" stroke-width="1.7" opacity="0.25"/>
<path d="M1040 856 Q1046 817 1061 779" stroke="#d01484" stroke-width="1.4" opacity="0.25"/>
<path d="M1056 825 Q1079 766 1095 705" stroke="#d01484" stroke-width="1.4" opacity="0.25"/>
<path d="M1073 793 Q1086 741 1108 692" stroke="#fca0c8" stroke-width="1.1" opacity="0.23"/>
<path d="M1063 840 Q1086 796 1099 747" stroke="#fca0c8" stroke-width="0.9" opacity="0.14"/>
<path d="M1089 778 Q1111 709 1143 644" stroke="#fca0c8" stroke-width="1.7" opacity="0.21"/>
<path d="M1078 824 Q1085 789 1106 760" stroke="#fca0c8" stroke-width="1.4" opacity="0.19"/>
<path d="M1078 841 Q1116 775 1145 706" stroke="#d01484" stroke-width="1.0" opacity="0.16"/>
<path d="M1090 824 Q1108 786 1127 750" stroke="#d01484" stroke-width="1.7" opacity="0.17"/>
<path d="M1095 828 Q1132 759 1170 692" stroke="#fca0c8" stroke-width="1.3" opacity="0.19"/>
</g>
<ellipse cx="1128" cy="874" rx="9" ry="24" fill="#ff9a28"/>
<clipPath id="spc"><path d="M576.0 569.0 C581.9 567.4 586.1 577.9 592.0 581.0 C597.9 584.1 602.4 587.7 610.0 587.0 C617.6 586.3 626.5 582.0 636.0 577.0 C645.5 572.0 655.1 562.7 665.0 558.0 C674.9 553.3 683.3 551.7 693.0 550.0 C702.7 548.3 711.1 547.7 721.0 548.0 C730.9 548.3 740.3 549.6 750.0 552.0 C759.7 554.4 765.9 555.8 777.0 562.0 C788.1 568.2 802.6 575.9 814.0 588.0 C825.4 600.1 835.7 617.8 843.0 632.0 C850.3 646.2 853.2 657.3 856.0 670.0 C858.8 682.7 859.7 692.9 859.0 705.0 C858.3 717.1 854.9 720.1 852.0 740.0 C849.1 759.9 844.1 790.5 842.0 820.0 C839.9 849.5 898.4 894.4 840.0 910.0 C781.6 925.6 563.4 929.1 505.0 910.0 C446.6 890.9 502.5 836.4 503.0 800.0 C503.5 763.6 504.7 725.7 508.0 700.0 C511.3 674.3 516.5 666.4 522.0 652.0 C527.5 637.6 533.8 627.7 540.0 617.0 C546.2 606.3 551.8 598.3 558.0 590.0 C564.2 581.7 570.1 570.6 576.0 569.0Z"/></clipPath>
<path d="M576.0 569.0 C581.9 567.4 586.1 577.9 592.0 581.0 C597.9 584.1 602.4 587.7 610.0 587.0 C617.6 586.3 626.5 582.0 636.0 577.0 C645.5 572.0 655.1 562.7 665.0 558.0 C674.9 553.3 683.3 551.7 693.0 550.0 C702.7 548.3 711.1 547.7 721.0 548.0 C730.9 548.3 740.3 549.6 750.0 552.0 C759.7 554.4 765.9 555.8 777.0 562.0 C788.1 568.2 802.6 575.9 814.0 588.0 C825.4 600.1 835.7 617.8 843.0 632.0 C850.3 646.2 853.2 657.3 856.0 670.0 C858.8 682.7 859.7 692.9 859.0 705.0 C858.3 717.1 854.9 720.1 852.0 740.0 C849.1 759.9 844.1 790.5 842.0 820.0 C839.9 849.5 898.4 894.4 840.0 910.0 C781.6 925.6 563.4 929.1 505.0 910.0 C446.6 890.9 502.5 836.4 503.0 800.0 C503.5 763.6 504.7 725.7 508.0 700.0 C511.3 674.3 516.5 666.4 522.0 652.0 C527.5 637.6 533.8 627.7 540.0 617.0 C546.2 606.3 551.8 598.3 558.0 590.0 C564.2 581.7 570.1 570.6 576.0 569.0Z" fill="#ff9a3c"/>
<g clip-path="url(#spc)">
<ellipse cx="585" cy="740" rx="60" ry="150" fill="#ffb44a" filter="url(#b14)" transform="rotate(10 585 740)"/>
<ellipse cx="730" cy="730" rx="95" ry="150" fill="#ff5280" filter="url(#b14)"/>
<ellipse cx="700" cy="640" rx="60" ry="50" fill="#ff6a78" filter="url(#b14)"/>
<ellipse cx="760" cy="760" rx="60" ry="100" fill="#fc3f88" filter="url(#b14)"/>
<ellipse cx="530" cy="720" rx="16" ry="120" fill="#ff8a3a" filter="url(#b8)" transform="rotate(8 530 720)"/>
</g>
<g clip-path="url(#spc)" fill="none" stroke-linecap="round" filter="url(#b05)">
<path d="M573 826 Q542 776 518 722" stroke="#e8482c" stroke-width="1.5" opacity="0.11"/>
<path d="M528 730 Q497 672 469 612" stroke="#e8482c" stroke-width="1.3" opacity="0.17"/>
<path d="M543 750 Q520 709 502 666" stroke="#ffd48a" stroke-width="1.3" opacity="0.15"/>
<path d="M528 699 Q505 644 479 592" stroke="#e8482c" stroke-width="1.3" opacity="0.16"/>
<path d="M555 749 Q536 690 506 637" stroke="#ffd48a" stroke-width="1.6" opacity="0.19"/>
<path d="M558 743 Q527 659 486 578" stroke="#e8482c" stroke-width="0.9" opacity="0.14"/>
<path d="M580 786 Q569 752 553 720" stroke="#ffd48a" stroke-width="1.6" opacity="0.11"/>
<path d="M564 725 Q554 685 535 650" stroke="#ffd48a" stroke-width="1.0" opacity="0.19"/>
<path d="M577 747 Q549 659 512 573" stroke="#e8482c" stroke-width="1.2" opacity="0.14"/>
<path d="M596 787 Q582 738 562 691" stroke="#e8482c" stroke-width="1.3" opacity="0.14"/>
<path d="M592 767 Q570 700 547 634" stroke="#e8482c" stroke-width="1.7" opacity="0.17"/>
<path d="M611 796 Q590 753 582 705" stroke="#ffd48a" stroke-width="1.0" opacity="0.10"/>
<path d="M578 680 Q550 602 530 522" stroke="#e8482c" stroke-width="1.7" opacity="0.15"/>
<path d="M618 797 Q611 762 599 729" stroke="#e8482c" stroke-width="0.8" opacity="0.19"/>
<path d="M595 692 Q590 656 576 622" stroke="#e8482c" stroke-width="1.6" opacity="0.14"/>
<path d="M608 727 Q583 642 564 554" stroke="#e8482c" stroke-width="1.3" opacity="0.12"/>
<path d="M626 783 Q614 751 610 716" stroke="#e8482c" stroke-width="1.1" opacity="0.17"/>
<path d="M620 733 Q608 692 601 650" stroke="#e8482c" stroke-width="1.0" opacity="0.09"/>
<path d="M625 724 Q616 682 608 639" stroke="#ffd48a" stroke-width="0.9" opacity="0.18"/>
<path d="M630 731 Q614 650 600 567" stroke="#e8482c" stroke-width="1.4" opacity="0.19"/>
<path d="M626 681 Q616 606 601 532" stroke="#e8482c" stroke-width="1.1" opacity="0.10"/>
<path d="M649 793 Q634 717 625 639" stroke="#e8482c" stroke-width="0.8" opacity="0.18"/>
<path d="M644 702 Q634 655 631 606" stroke="#e8482c" stroke-width="1.2" opacity="0.11"/>
<path d="M655 763 Q650 671 633 581" stroke="#e8482c" stroke-width="1.0" opacity="0.19"/>
<path d="M657 748 Q652 717 651 686" stroke="#e8482c" stroke-width="1.3" opacity="0.11"/>
<path d="M668 800 Q658 753 659 705" stroke="#e8482c" stroke-width="0.8" opacity="0.09"/>
<path d="M668 766 Q663 698 658 631" stroke="#ffd48a" stroke-width="1.4" opacity="0.17"/>
<path d="M673 742 Q678 690 668 639" stroke="#e8482c" stroke-width="1.5" opacity="0.16"/>
<path d="M672 675 Q669 588 663 501" stroke="#ffd48a" stroke-width="1.6" opacity="0.10"/>
<path d="M681 724 Q683 641 677 558" stroke="#ffd48a" stroke-width="1.3" opacity="0.18"/>
<path d="M687 696 Q680 650 686 605" stroke="#e8482c" stroke-width="1.1" opacity="0.10"/>
<path d="M693 716 Q695 646 694 575" stroke="#ffd48a" stroke-width="1.2" opacity="0.09"/>
<path d="M699 688 Q701 625 702 563" stroke="#ffd48a" stroke-width="0.8" opacity="0.17"/>
<path d="M699 789 Q703 741 702 693" stroke="#e8482c" stroke-width="1.5" opacity="0.19"/>
<path d="M706 743 Q712 682 712 621" stroke="#ffd48a" stroke-width="1.4" opacity="0.16"/>
<path d="M707 778 Q713 732 713 684" stroke="#e8482c" stroke-width="1.3" opacity="0.09"/>
<path d="M712 761 Q721 688 724 614" stroke="#ffd48a" stroke-width="1.0" opacity="0.14"/>
<path d="M721 732 Q731 694 729 655" stroke="#e8482c" stroke-width="1.7" opacity="0.19"/>
<path d="M725 733 Q740 652 742 569" stroke="#e8482c" stroke-width="1.0" opacity="0.11"/>
<path d="M728 771 Q732 703 746 637" stroke="#e8482c" stroke-width="1.7" opacity="0.10"/>
<path d="M739 727 Q755 642 765 556" stroke="#e8482c" stroke-width="1.6" opacity="0.14"/>
<path d="M729 802 Q738 741 748 680" stroke="#e8482c" stroke-width="0.9" opacity="0.13"/>
<path d="M755 680 Q764 649 766 618" stroke="#ffd48a" stroke-width="0.9" opacity="0.19"/>
<path d="M765 672 Q773 623 784 575" stroke="#e8482c" stroke-width="1.7" opacity="0.15"/>
<path d="M755 742 Q758 694 774 648" stroke="#e8482c" stroke-width="1.6" opacity="0.12"/>
<path d="M755 770 Q767 724 777 677" stroke="#e8482c" stroke-width="1.1" opacity="0.19"/>
<path d="M780 689 Q803 622 814 552" stroke="#ffd48a" stroke-width="1.3" opacity="0.17"/>
<path d="M779 701 Q797 645 809 586" stroke="#ffd48a" stroke-width="1.0" opacity="0.10"/>
<path d="M764 791 Q778 732 797 674" stroke="#e8482c" stroke-width="1.5" opacity="0.19"/>
<path d="M788 716 Q803 668 816 619" stroke="#e8482c" stroke-width="0.9" opacity="0.11"/>
<path d="M804 681 Q818 621 841 562" stroke="#ffd48a" stroke-width="1.7" opacity="0.14"/>
<path d="M776 785 Q785 749 799 715" stroke="#e8482c" stroke-width="1.0" opacity="0.12"/>
<path d="M816 688 Q841 614 867 541" stroke="#e8482c" stroke-width="1.3" opacity="0.13"/>
<path d="M778 806 Q801 763 812 715" stroke="#e8482c" stroke-width="1.3" opacity="0.16"/>
<path d="M792 787 Q806 741 827 697" stroke="#e8482c" stroke-width="1.2" opacity="0.19"/>
<path d="M833 697 Q840 664 858 637" stroke="#ffd48a" stroke-width="1.6" opacity="0.14"/>
<path d="M787 820 Q814 771 830 717" stroke="#ffd48a" stroke-width="1.6" opacity="0.19"/>
<path d="M796 806 Q813 768 829 731" stroke="#ffd48a" stroke-width="1.7" opacity="0.17"/>
<path d="M842 719 Q868 664 892 610" stroke="#e8482c" stroke-width="1.5" opacity="0.11"/>
<path d="M841 738 Q858 690 884 647" stroke="#e8482c" stroke-width="1.4" opacity="0.16"/>
</g>
<path d="M140.0 894.0 C131.3 881.5 159.6 867.7 170.0 858.0 C180.4 848.3 191.0 842.2 200.0 838.0 C209.0 833.8 213.3 833.7 222.0 834.0 C230.7 834.3 239.9 835.1 250.0 840.0 C260.1 844.9 269.3 851.6 280.0 862.0 C290.7 872.4 322.4 888.2 312.0 900.0 C301.6 911.8 249.8 931.0 220.0 930.0 C190.2 929.0 148.7 906.5 140.0 894.0Z" fill="url(#gSmallL)"/>
<clipPath id="rpc"><path d="M238.0 777.0 C236.6 761.9 239.2 756.6 243.0 745.0 C246.8 733.4 251.2 721.3 260.0 710.0 C268.8 698.7 282.4 688.8 294.0 680.0 C305.6 671.2 313.0 664.2 327.0 659.0 C341.0 653.8 361.5 651.1 375.0 650.0 C388.5 648.9 397.2 651.6 405.0 652.5 C412.8 653.4 414.6 655.1 420.0 655.0 C425.4 654.9 430.8 650.8 436.0 652.0 C441.2 653.2 446.2 656.6 450.0 662.0 C453.8 667.4 455.2 674.5 458.0 683.0 C460.8 691.5 463.2 700.9 466.0 711.0 C468.8 721.1 469.8 728.5 474.0 741.0 C478.2 753.5 482.5 768.4 490.0 783.0 C497.5 797.6 508.2 811.3 517.0 825.0 C525.8 838.7 535.5 848.1 541.0 862.0 C546.5 875.9 573.4 891.5 549.0 905.0 C524.6 918.5 447.5 940.0 400.0 940.0 C352.5 940.0 300.8 923.7 275.0 905.0 C249.2 886.3 257.4 854.2 251.0 832.0 C244.6 809.8 239.4 792.1 238.0 777.0Z"/></clipPath>
<path d="M238.0 777.0 C236.6 761.9 239.2 756.6 243.0 745.0 C246.8 733.4 251.2 721.3 260.0 710.0 C268.8 698.7 282.4 688.8 294.0 680.0 C305.6 671.2 313.0 664.2 327.0 659.0 C341.0 653.8 361.5 651.1 375.0 650.0 C388.5 648.9 397.2 651.6 405.0 652.5 C412.8 653.4 414.6 655.1 420.0 655.0 C425.4 654.9 430.8 650.8 436.0 652.0 C441.2 653.2 446.2 656.6 450.0 662.0 C453.8 667.4 455.2 674.5 458.0 683.0 C460.8 691.5 463.2 700.9 466.0 711.0 C468.8 721.1 469.8 728.5 474.0 741.0 C478.2 753.5 482.5 768.4 490.0 783.0 C497.5 797.6 508.2 811.3 517.0 825.0 C525.8 838.7 535.5 848.1 541.0 862.0 C546.5 875.9 573.4 891.5 549.0 905.0 C524.6 918.5 447.5 940.0 400.0 940.0 C352.5 940.0 300.8 923.7 275.0 905.0 C249.2 886.3 257.4 854.2 251.0 832.0 C244.6 809.8 239.4 792.1 238.0 777.0Z" fill="url(#gRedPetal)"/>
<g clip-path="url(#rpc)">
<ellipse cx="480" cy="850" rx="60" ry="70" fill="#ff9a2c" filter="url(#b14)"/>
<ellipse cx="300" cy="860" rx="40" ry="50" fill="#ffa640" filter="url(#b14)"/>
<ellipse cx="245" cy="760" rx="12" ry="60" fill="#ff4a30" filter="url(#b8)"/>
</g>
<g clip-path="url(#rpc)" fill="none" stroke-linecap="round" filter="url(#b05)">
<path d="M337 898 Q305 845 272 794" stroke="#e0401c" stroke-width="1.0" opacity="0.15"/>
<path d="M322 868 Q298 815 263 769" stroke="#ffc070" stroke-width="1.6" opacity="0.14"/>
<path d="M329 873 Q288 795 243 720" stroke="#e0401c" stroke-width="0.8" opacity="0.14"/>
<path d="M321 849 Q302 808 279 768" stroke="#ffc070" stroke-width="1.0" opacity="0.09"/>
<path d="M323 848 Q288 786 260 721" stroke="#ffc070" stroke-width="1.5" opacity="0.14"/>
<path d="M292 775 Q275 729 250 687" stroke="#e0401c" stroke-width="1.0" opacity="0.17"/>
<path d="M298 775 Q270 722 249 666" stroke="#e0401c" stroke-width="1.2" opacity="0.16"/>
<path d="M350 879 Q326 831 309 780" stroke="#ffc070" stroke-width="0.9" opacity="0.10"/>
<path d="M338 846 Q311 766 275 690" stroke="#ffc070" stroke-width="1.7" opacity="0.19"/>
<path d="M352 872 Q325 790 292 711" stroke="#e0401c" stroke-width="1.4" opacity="0.13"/>
<path d="M348 851 Q328 815 322 775" stroke="#e0401c" stroke-width="1.1" opacity="0.19"/>
<path d="M322 764 Q307 724 296 683" stroke="#ffc070" stroke-width="1.6" opacity="0.14"/>
<path d="M348 830 Q338 778 317 730" stroke="#e0401c" stroke-width="1.1" opacity="0.18"/>
<path d="M354 837 Q336 761 311 686" stroke="#e0401c" stroke-width="0.8" opacity="0.10"/>
<path d="M365 857 Q353 783 330 712" stroke="#e0401c" stroke-width="1.0" opacity="0.19"/>
<path d="M367 856 Q349 785 335 714" stroke="#e0401c" stroke-width="0.8" opacity="0.17"/>
<path d="M361 803 Q337 719 327 633" stroke="#e0401c" stroke-width="1.2" opacity="0.19"/>
<path d="M371 837 Q363 793 356 748" stroke="#e0401c" stroke-width="1.7" opacity="0.11"/>
<path d="M367 786 Q358 707 342 629" stroke="#ffc070" stroke-width="1.1" opacity="0.12"/>
<path d="M369 780 Q360 746 359 711" stroke="#ffc070" stroke-width="1.0" opacity="0.10"/>
<path d="M376 812 Q377 762 364 714" stroke="#ffc070" stroke-width="1.7" opacity="0.12"/>
<path d="M387 877 Q384 817 375 758" stroke="#e0401c" stroke-width="1.0" opacity="0.13"/>
<path d="M385 793 Q385 718 374 644" stroke="#ffc070" stroke-width="0.9" opacity="0.18"/>
<path d="M389 809 Q390 756 384 704" stroke="#e0401c" stroke-width="1.0" opacity="0.12"/>
<path d="M391 763 Q387 698 387 634" stroke="#e0401c" stroke-width="1.7" opacity="0.14"/>
<path d="M397 774 Q403 704 395 635" stroke="#e0401c" stroke-width="1.2" opacity="0.18"/>
<path d="M405 758 Q402 726 406 694" stroke="#e0401c" stroke-width="0.9" opacity="0.19"/>
<path d="M409 756 Q416 704 413 652" stroke="#e0401c" stroke-width="1.0" opacity="0.17"/>
<path d="M408 875 Q414 809 416 744" stroke="#e0401c" stroke-width="1.1" opacity="0.10"/>
<path d="M411 854 Q418 788 420 722" stroke="#e0401c" stroke-width="0.8" opacity="0.12"/>
<path d="M414 864 Q415 815 424 767" stroke="#ffc070" stroke-width="1.3" opacity="0.10"/>
<path d="M419 834 Q428 772 433 709" stroke="#e0401c" stroke-width="0.9" opacity="0.16"/>
<path d="M421 851 Q434 804 435 755" stroke="#e0401c" stroke-width="1.3" opacity="0.13"/>
<path d="M438 769 Q451 680 467 591" stroke="#e0401c" stroke-width="1.5" opacity="0.11"/>
<path d="M442 764 Q457 710 462 655" stroke="#e0401c" stroke-width="1.6" opacity="0.14"/>
<path d="M422 890 Q437 829 448 767" stroke="#ffc070" stroke-width="0.8" opacity="0.16"/>
<path d="M441 822 Q447 784 459 747" stroke="#e0401c" stroke-width="1.7" opacity="0.10"/>
<path d="M456 781 Q474 695 500 611" stroke="#e0401c" stroke-width="1.7" opacity="0.19"/>
<path d="M432 887 Q453 804 478 722" stroke="#ffc070" stroke-width="1.4" opacity="0.18"/>
<path d="M463 786 Q474 744 488 703" stroke="#ffc070" stroke-width="1.6" opacity="0.11"/>
<path d="M451 840 Q468 782 489 724" stroke="#e0401c" stroke-width="1.0" opacity="0.17"/>
<path d="M439 891 Q464 832 482 771" stroke="#e0401c" stroke-width="1.6" opacity="0.10"/>
<path d="M467 823 Q488 759 515 696" stroke="#e0401c" stroke-width="1.3" opacity="0.13"/>
<path d="M465 838 Q480 784 507 734" stroke="#ffc070" stroke-width="1.2" opacity="0.11"/>
<path d="M488 796 Q507 741 534 690" stroke="#e0401c" stroke-width="0.9" opacity="0.10"/>
<path d="M451 888 Q474 836 497 785" stroke="#e0401c" stroke-width="1.4" opacity="0.10"/>
<path d="M496 800 Q517 743 549 691" stroke="#e0401c" stroke-width="1.1" opacity="0.19"/>
<path d="M504 791 Q547 712 584 630" stroke="#ffc070" stroke-width="0.9" opacity="0.19"/>
<path d="M516 781 Q552 704 596 631" stroke="#ffc070" stroke-width="1.7" opacity="0.10"/>
<path d="M506 809 Q531 777 545 740" stroke="#e0401c" stroke-width="1.6" opacity="0.11"/>
</g>
<circle cx="364" cy="749" r="56" fill="#fff" filter="url(#b4)" opacity=".9"/><circle cx="364" cy="749" r="51" fill="#fff"/>
<clipPath id="mpc"><path d="M472.0 741.0 C471.5 729.6 480.8 723.2 487.0 717.0 C493.2 710.8 501.1 707.7 508.0 705.0 C514.9 702.3 520.6 701.5 527.0 701.5 C533.4 701.5 539.8 702.8 545.0 705.0 C550.2 707.2 553.0 709.7 557.0 714.0 C561.0 718.3 564.4 724.3 568.0 730.0 C571.6 735.7 574.2 739.2 578.0 747.0 C581.8 754.8 585.8 765.8 590.0 775.0 C594.2 784.2 597.5 788.7 602.0 800.0 C606.5 811.3 612.0 826.1 616.0 840.0 C620.0 853.9 623.1 867.9 625.0 880.0 C626.9 892.1 640.3 903.9 627.0 910.0 C613.7 916.1 562.9 923.3 548.0 915.0 C533.1 906.7 546.4 877.6 541.0 862.0 C535.6 846.4 525.8 838.7 517.0 825.0 C508.2 811.3 497.8 797.6 490.0 783.0 C482.2 768.4 472.5 752.4 472.0 741.0Z"/></clipPath>
<path d="M472.0 741.0 C471.5 729.6 480.8 723.2 487.0 717.0 C493.2 710.8 501.1 707.7 508.0 705.0 C514.9 702.3 520.6 701.5 527.0 701.5 C533.4 701.5 539.8 702.8 545.0 705.0 C550.2 707.2 553.0 709.7 557.0 714.0 C561.0 718.3 564.4 724.3 568.0 730.0 C571.6 735.7 574.2 739.2 578.0 747.0 C581.8 754.8 585.8 765.8 590.0 775.0 C594.2 784.2 597.5 788.7 602.0 800.0 C606.5 811.3 612.0 826.1 616.0 840.0 C620.0 853.9 623.1 867.9 625.0 880.0 C626.9 892.1 640.3 903.9 627.0 910.0 C613.7 916.1 562.9 923.3 548.0 915.0 C533.1 906.7 546.4 877.6 541.0 862.0 C535.6 846.4 525.8 838.7 517.0 825.0 C508.2 811.3 497.8 797.6 490.0 783.0 C482.2 768.4 472.5 752.4 472.0 741.0Z" fill="url(#gMidPetal)"/>
<g clip-path="url(#mpc)" fill="none" stroke-linecap="round" filter="url(#b05)">
<path d="M499 821 Q478 790 463 756" stroke="#f0503c" stroke-width="1.1" opacity="0.09"/>
<path d="M548 903 Q515 835 477 770" stroke="#ffd0a8" stroke-width="0.9" opacity="0.17"/>
<path d="M530 860 Q501 807 476 753" stroke="#ffd0a8" stroke-width="1.3" opacity="0.15"/>
<path d="M558 906 Q528 834 494 763" stroke="#f0503c" stroke-width="1.5" opacity="0.12"/>
<path d="M538 850 Q524 806 504 766" stroke="#f0503c" stroke-width="0.9" opacity="0.17"/>
<path d="M528 821 Q515 783 498 747" stroke="#ffd0a8" stroke-width="1.3" opacity="0.16"/>
<path d="M569 915 Q555 891 550 863" stroke="#ffd0a8" stroke-width="1.2" opacity="0.14"/>
<path d="M568 898 Q558 861 544 826" stroke="#f0503c" stroke-width="0.8" opacity="0.13"/>
<path d="M560 871 Q550 834 538 798" stroke="#f0503c" stroke-width="1.0" opacity="0.16"/>
<path d="M572 897 Q549 825 533 751" stroke="#f0503c" stroke-width="0.8" opacity="0.16"/>
<path d="M558 816 Q544 771 536 724" stroke="#f0503c" stroke-width="1.4" opacity="0.15"/>
<path d="M564 832 Q560 783 544 736" stroke="#ffd0a8" stroke-width="1.0" opacity="0.18"/>
<path d="M570 846 Q558 800 553 752" stroke="#f0503c" stroke-width="1.5" opacity="0.09"/>
<path d="M569 794 Q560 761 559 727" stroke="#ffd0a8" stroke-width="1.3" opacity="0.16"/>
<path d="M587 889 Q579 847 577 804" stroke="#f0503c" stroke-width="1.6" opacity="0.17"/>
<path d="M592 910 Q589 839 579 769" stroke="#f0503c" stroke-width="1.5" opacity="0.14"/>
<path d="M592 897 Q583 859 587 820" stroke="#f0503c" stroke-width="1.5" opacity="0.16"/>
<path d="M594 820 Q594 780 591 740" stroke="#f0503c" stroke-width="1.5" opacity="0.14"/>
<path d="M597 829 Q592 752 594 675" stroke="#ffd0a8" stroke-width="0.8" opacity="0.12"/>
<path d="M602 816 Q606 740 603 665" stroke="#f0503c" stroke-width="1.6" opacity="0.12"/>
<path d="M608 796 Q612 737 612 677" stroke="#ffd0a8" stroke-width="1.7" opacity="0.14"/>
<path d="M614 823 Q619 752 625 681" stroke="#ffd0a8" stroke-width="1.3" opacity="0.12"/>
</g>
<clipPath id="cpc"><path d="M795.0 707.0 C801.6 706.0 801.8 713.1 803.0 718.0 C804.2 722.9 804.3 724.3 802.0 735.0 C799.7 745.7 795.5 760.1 790.0 780.0 C784.5 799.9 775.2 827.5 770.0 850.0 C764.8 872.5 787.4 899.6 760.0 910.0 C732.6 920.4 638.0 920.4 612.0 910.0 C586.0 899.6 609.0 868.2 610.0 850.0 C611.0 831.8 612.8 818.5 618.0 805.0 C623.2 791.5 629.3 781.4 640.0 772.0 C650.7 762.6 665.3 756.9 680.0 751.0 C694.7 745.1 710.3 742.7 725.0 738.0 C739.7 733.3 752.9 729.4 765.0 724.0 C777.1 718.6 788.4 708.0 795.0 707.0Z"/></clipPath>
<path d="M795.0 707.0 C801.6 706.0 801.8 713.1 803.0 718.0 C804.2 722.9 804.3 724.3 802.0 735.0 C799.7 745.7 795.5 760.1 790.0 780.0 C784.5 799.9 775.2 827.5 770.0 850.0 C764.8 872.5 787.4 899.6 760.0 910.0 C732.6 920.4 638.0 920.4 612.0 910.0 C586.0 899.6 609.0 868.2 610.0 850.0 C611.0 831.8 612.8 818.5 618.0 805.0 C623.2 791.5 629.3 781.4 640.0 772.0 C650.7 762.6 665.3 756.9 680.0 751.0 C694.7 745.1 710.3 742.7 725.0 738.0 C739.7 733.3 752.9 729.4 765.0 724.0 C777.1 718.6 788.4 708.0 795.0 707.0Z" fill="url(#gPeachPetal)"/>
<g clip-path="url(#cpc)"><ellipse cx="730" cy="880" rx="50" ry="60" fill="#ff5a70" filter="url(#b14)"/><ellipse cx="715" cy="775" rx="45" ry="20" fill="#ffc8a0" filter="url(#b8)" transform="rotate(-22 715 775)"/></g>
<g clip-path="url(#cpc)" fill="none" stroke-linecap="round" filter="url(#b05)">
<path d="M602 818 Q601 784 589 753" stroke="#f0603c" stroke-width="0.8" opacity="0.10"/>
<path d="M616 854 Q604 819 604 781" stroke="#f0603c" stroke-width="1.4" opacity="0.16"/>
<path d="M612 800 Q609 768 603 736" stroke="#f0603c" stroke-width="1.6" opacity="0.18"/>
<path d="M628 892 Q626 813 612 735" stroke="#ffe0c0" stroke-width="0.9" opacity="0.11"/>
<path d="M630 896 Q627 818 615 741" stroke="#ffe0c0" stroke-width="1.6" opacity="0.16"/>
<path d="M633 886 Q634 852 628 818" stroke="#f0603c" stroke-width="1.1" opacity="0.13"/>
<path d="M634 865 Q635 820 630 775" stroke="#f0603c" stroke-width="1.1" opacity="0.19"/>
<path d="M639 783 Q632 718 639 654" stroke="#f0603c" stroke-width="1.2" opacity="0.17"/>
<path d="M644 803 Q641 743 646 683" stroke="#ffe0c0" stroke-width="0.8" opacity="0.18"/>
<path d="M644 900 Q650 860 648 819" stroke="#ffe0c0" stroke-width="0.8" opacity="0.14"/>
<path d="M656 791 Q660 751 663 712" stroke="#f0603c" stroke-width="1.6" opacity="0.12"/>
<path d="M656 862 Q664 821 666 780" stroke="#f0603c" stroke-width="0.9" opacity="0.16"/>
<path d="M666 793 Q679 725 683 656" stroke="#ffe0c0" stroke-width="1.1" opacity="0.13"/>
<path d="M675 780 Q686 748 686 713" stroke="#f0603c" stroke-width="1.0" opacity="0.12"/>
<path d="M673 834 Q689 786 693 735" stroke="#f0603c" stroke-width="1.2" opacity="0.15"/>
<path d="M685 801 Q698 736 714 673" stroke="#f0603c" stroke-width="0.9" opacity="0.18"/>
<path d="M690 804 Q698 766 709 729" stroke="#ffe0c0" stroke-width="1.3" opacity="0.10"/>
<path d="M700 786 Q707 744 722 704" stroke="#f0603c" stroke-width="1.5" opacity="0.18"/>
<path d="M675 884 Q685 842 700 801" stroke="#f0603c" stroke-width="0.9" opacity="0.12"/>
<path d="M714 777 Q731 709 759 643" stroke="#ffe0c0" stroke-width="0.9" opacity="0.13"/>
<path d="M715 804 Q740 738 766 672" stroke="#f0603c" stroke-width="1.4" opacity="0.10"/>
<path d="M697 857 Q707 828 719 800" stroke="#ffe0c0" stroke-width="1.4" opacity="0.14"/>
<path d="M706 850 Q722 817 736 782" stroke="#f0603c" stroke-width="1.5" opacity="0.19"/>
<path d="M716 838 Q745 772 777 708" stroke="#f0603c" stroke-width="1.5" opacity="0.18"/>
<path d="M730 825 Q767 757 800 687" stroke="#ffe0c0" stroke-width="1.2" opacity="0.12"/>
<path d="M694 900 Q723 856 745 807" stroke="#ffe0c0" stroke-width="1.4" opacity="0.12"/>
<path d="M721 859 Q752 802 785 747" stroke="#ffe0c0" stroke-width="1.7" opacity="0.11"/>
<path d="M749 824 Q776 780 803 737" stroke="#ffe0c0" stroke-width="0.8" opacity="0.15"/>
<path d="M752 825 Q797 755 842 686" stroke="#f0603c" stroke-width="1.3" opacity="0.15"/>
<path d="M738 860 Q779 809 813 753" stroke="#f0603c" stroke-width="1.2" opacity="0.19"/>
<path d="M754 843 Q787 803 814 759" stroke="#f0603c" stroke-width="1.7" opacity="0.13"/>
<path d="M724 890 Q749 845 786 808" stroke="#f0603c" stroke-width="1.2" opacity="0.16"/>
<path d="M726 894 Q755 864 779 830" stroke="#ffe0c0" stroke-width="1.3" opacity="0.11"/>
<path d="M742 884 Q765 850 796 823" stroke="#ffe0c0" stroke-width="1.6" opacity="0.16"/>
</g>
<clipPath id="mgc"><path d="M747.0 826.0 C748.9 811.4 751.4 799.0 759.0 786.0 C766.6 773.0 777.3 760.9 791.0 751.0 C804.7 741.1 820.1 733.5 838.0 729.0 C855.9 724.5 878.1 724.3 894.0 725.0 C909.9 725.7 918.9 729.2 930.0 733.0 C941.1 736.8 946.4 739.2 958.0 747.0 C969.6 754.8 986.8 765.7 997.0 778.0 C1007.2 790.3 1013.0 803.8 1017.0 818.0 C1021.0 832.2 1021.2 844.1 1020.0 860.0 C1018.8 875.9 1055.1 901.3 1010.0 910.0 C964.9 918.7 805.4 916.9 760.0 910.0 C714.6 903.1 750.3 884.6 748.0 870.0 C745.7 855.4 745.1 840.6 747.0 826.0Z"/></clipPath>
<path d="M747.0 826.0 C748.9 811.4 751.4 799.0 759.0 786.0 C766.6 773.0 777.3 760.9 791.0 751.0 C804.7 741.1 820.1 733.5 838.0 729.0 C855.9 724.5 878.1 724.3 894.0 725.0 C909.9 725.7 918.9 729.2 930.0 733.0 C941.1 736.8 946.4 739.2 958.0 747.0 C969.6 754.8 986.8 765.7 997.0 778.0 C1007.2 790.3 1013.0 803.8 1017.0 818.0 C1021.0 832.2 1021.2 844.1 1020.0 860.0 C1018.8 875.9 1055.1 901.3 1010.0 910.0 C964.9 918.7 805.4 916.9 760.0 910.0 C714.6 903.1 750.3 884.6 748.0 870.0 C745.7 855.4 745.1 840.6 747.0 826.0Z" fill="url(#gMag)" stroke="#f9a8d8" stroke-width="1.2"/>
<g clip-path="url(#mgc)"><ellipse cx="900" cy="745" rx="90" ry="16" fill="#f07ad0" filter="url(#b8)" opacity=".7"/></g>
<g clip-path="url(#mgc)" fill="none" stroke-linecap="round" filter="url(#b05)">
<path d="M774 865 Q762 836 740 814" stroke="#b81a9c" stroke-width="1.4" opacity="0.23"/>
<path d="M786 869 Q768 840 750 812" stroke="#b81a9c" stroke-width="1.6" opacity="0.17"/>
<path d="M801 884 Q779 854 763 820" stroke="#b81a9c" stroke-width="0.9" opacity="0.12"/>
<path d="M804 881 Q786 854 773 825" stroke="#b81a9c" stroke-width="1.2" opacity="0.21"/>
<path d="M804 871 Q781 815 749 763" stroke="#b81a9c" stroke-width="1.6" opacity="0.25"/>
<path d="M819 889 Q796 837 771 787" stroke="#b81a9c" stroke-width="0.8" opacity="0.25"/>
<path d="M818 877 Q803 856 797 831" stroke="#b81a9c" stroke-width="1.5" opacity="0.17"/>
<path d="M795 815 Q769 766 753 713" stroke="#f8a0e0" stroke-width="1.4" opacity="0.23"/>
<path d="M804 812 Q790 759 767 709" stroke="#b81a9c" stroke-width="1.4" opacity="0.19"/>
<path d="M825 854 Q808 798 789 742" stroke="#b81a9c" stroke-width="1.0" opacity="0.14"/>
<path d="M841 890 Q824 852 817 811" stroke="#b81a9c" stroke-width="1.2" opacity="0.20"/>
<path d="M847 894 Q832 838 819 783" stroke="#b81a9c" stroke-width="1.4" opacity="0.24"/>
<path d="M840 852 Q820 793 811 731" stroke="#f8a0e0" stroke-width="1.4" opacity="0.12"/>
<path d="M841 824 Q826 765 817 705" stroke="#f8a0e0" stroke-width="1.3" opacity="0.19"/>
<path d="M859 888 Q852 837 842 786" stroke="#b81a9c" stroke-width="1.6" opacity="0.17"/>
<path d="M854 838 Q843 785 839 731" stroke="#b81a9c" stroke-width="1.2" opacity="0.20"/>
<path d="M864 861 Q857 805 852 749" stroke="#b81a9c" stroke-width="1.0" opacity="0.19"/>
<path d="M867 824 Q861 769 859 714" stroke="#b81a9c" stroke-width="1.0" opacity="0.20"/>
<path d="M870 810 Q873 787 868 764" stroke="#f8a0e0" stroke-width="1.3" opacity="0.13"/>
<path d="M877 889 Q882 860 876 831" stroke="#f8a0e0" stroke-width="1.4" opacity="0.23"/>
<path d="M884 828 Q887 780 886 733" stroke="#f8a0e0" stroke-width="1.3" opacity="0.22"/>
<path d="M887 822 Q892 782 890 741" stroke="#b81a9c" stroke-width="0.9" opacity="0.13"/>
<path d="M898 797 Q900 748 906 700" stroke="#f8a0e0" stroke-width="1.5" opacity="0.20"/>
<path d="M896 860 Q897 821 903 782" stroke="#b81a9c" stroke-width="1.4" opacity="0.25"/>
<path d="M903 834 Q901 810 909 788" stroke="#f8a0e0" stroke-width="1.3" opacity="0.25"/>
<path d="M901 890 Q909 853 914 816" stroke="#f8a0e0" stroke-width="1.7" opacity="0.19"/>
<path d="M907 882 Q912 834 926 787" stroke="#b81a9c" stroke-width="0.8" opacity="0.12"/>
<path d="M913 881 Q921 819 941 760" stroke="#f8a0e0" stroke-width="0.9" opacity="0.12"/>
<path d="M920 871 Q929 819 947 769" stroke="#b81a9c" stroke-width="1.5" opacity="0.22"/>
<path d="M940 824 Q949 801 954 777" stroke="#f8a0e0" stroke-width="1.2" opacity="0.25"/>
<path d="M950 803 Q959 751 982 704" stroke="#b81a9c" stroke-width="1.4" opacity="0.23"/>
<path d="M934 867 Q947 817 968 769" stroke="#f8a0e0" stroke-width="1.2" opacity="0.13"/>
<path d="M949 844 Q966 808 978 770" stroke="#b81a9c" stroke-width="1.5" opacity="0.17"/>
<path d="M958 842 Q972 806 989 771" stroke="#f8a0e0" stroke-width="1.7" opacity="0.23"/>
<path d="M948 875 Q964 857 969 832" stroke="#f8a0e0" stroke-width="1.6" opacity="0.17"/>
<path d="M985 816 Q1012 766 1036 715" stroke="#b81a9c" stroke-width="1.2" opacity="0.24"/>
<path d="M975 844 Q1003 806 1020 762" stroke="#f8a0e0" stroke-width="1.0" opacity="0.12"/>
<path d="M967 870 Q994 833 1013 790" stroke="#f8a0e0" stroke-width="0.8" opacity="0.24"/>
<path d="M998 836 Q1020 796 1047 759" stroke="#f8a0e0" stroke-width="1.6" opacity="0.22"/>
<path d="M974 884 Q988 864 1002 843" stroke="#f8a0e0" stroke-width="1.0" opacity="0.23"/>
</g>
<circle cx="1073" cy="917" r="50" fill="#fff" filter="url(#b4)" opacity=".9"/><circle cx="1073" cy="917" r="46" fill="#fff"/>
</g>
<path d="M130 164.5 L130 203 L138.5 195 L145 209 L151 206 L144.5 192.5 L156 192.5Z" fill="#000" stroke="#fff" stroke-width="2" stroke-linejoin="round"/>
</svg>
<div class="bar1"></div><div class="bar2"></div><div class="ltool"></div><div class="rpanel" id="rp"></div><div class="status"></div>
<!-- top bar -->
<div class="abs" style="left:42px;top:5px;width:306px;height:33px;border-radius:14px;background:#2a2a2a"></div>
<div class="abs" style="left:44px;top:7px;width:72px;height:27px;border-radius:13px;background:#12c6e2"></div>
<div class="t b" style="left:70.5px;top:15px;font-size:11.6px;color:#0b2740">Vector</div>
<div class="t" style="left:145.5px;top:15.5px;font-size:11.2px;color:#c4c4c4">Pixel</div>
<div class="t" style="left:210.5px;top:15.5px;font-size:11.2px;color:#c4c4c4">Layout</div>
<div class="t" style="left:286.5px;top:15.5px;font-size:11.2px;color:#c4c4c4">Canva AI</div>
<div class="abs" style="left:383px;top:6px;width:78px;height:31px;border-radius:14px;background:#2a2a2a"></div>
<div class="abs" style="left:426px;top:8.5px;width:31.5px;height:26px;border-radius:10px;background:#171717;border:1px solid #4c4c4c"></div>
<div class="abs" style="left:1328px;top:10px;width:75px;height:22px;border-radius:4px;background:#292929"></div>
<div class="abs" style="left:1416px;top:10px;width:24px;height:22.5px;border-radius:5px;background:#191919;border:1px solid #444"></div>
<div class="abs" style="left:1470px;top:10px;width:82px;height:22.5px;border-radius:4px;background:#565656"></div>
<div class="abs" style="left:1473.5px;top:12.5px;width:4px;height:17.5px;border-radius:2px;background:#18cbe6"></div>
<div class="t b" style="left:1487px;top:16.5px;font-size:8.8px;color:#f2f2f2">Export PNG</div>
<div class="abs" style="left:1611px;top:0;width:5px;height:5px;border-radius:3px;background:#6a5ae0"></div>
<!-- second bar -->
<div class="t b" style="left:2px;top:57.5px;font-size:8.6px;color:#dcdcdc">No Selection</div>
<div class="abs" style="left:67px;top:56px;width:12.4px;height:12px;border-radius:3px;background:#2b7bf2"></div>
<div class="t b" style="left:83.8px;top:57.5px;font-size:9px;color:#e4e4e4">Auto-select:</div>
<div class="abs" style="left:145.5px;top:52px;width:24px;height:18.5px;border-radius:4px;background:#1b1b1b;border:1px solid #454545"></div>
<div class="btn" style="left:232px;top:54px;width:105px;height:15.5px;line-height:15.5px">Document Setup...</div>
<div class="btn" style="left:351px;top:54px;width:89px;height:15.5px;line-height:15.5px">App Settings...</div>
<svg class="abs" style="left:0;top:0" width="1622" height="78" viewBox="0 0 1622 78" fill="none" stroke-linecap="round" stroke-linejoin="round">
<!-- logo a -->
<path d="M14 17.5 C17 12 25 10.5 29.5 12.5 L30.5 30.5 L26 30.5 L26 26 C23 30 17.5 31.5 14.5 29.5 C10.5 26.5 13 21 18 19.5 C21.5 18.5 24.5 18.5 26 17 C24 14.5 19 15 17 18.5Z M25.5 20.5 C22.5 21.5 18 22 17 25 C17 28 22 27.5 25.5 23Z" fill="#f4f4f4" stroke="none" fill-rule="evenodd"/>
<!-- vector icon -->
<g stroke="#0b2740" stroke-width="1.7"><circle cx="52.5" cy="15.2" r="1.9"/><circle cx="63.5" cy="15.2" r="1.9"/><circle cx="58" cy="26" r="1.9"/><path d="M52.8 17.2 C53 22 55 24.5 56.6 24.8 M63.2 17.2 C63 22 61 24.5 59.4 24.8"/></g>
<!-- pixel icon -->
<g stroke="#c4c4c4" stroke-width="1.3"><circle cx="133" cy="20.5" r="5.6"/><path d="M133 20.5 A3 3 0 0 0 130.5 17.2" /></g>
<!-- layout icon -->
<g stroke="#c4c4c4" stroke-width="1.3"><rect x="193" y="15" width="4" height="11" rx="1"/><rect x="200" y="15" width="4.5" height="4.5" rx="1"/><path d="M200 22.5 H204.5 M200 25.8 H204.5"/></g>
<!-- canva ai sparkle -->
<g fill="#c4c4c4" stroke="none"><path d="M275 15 C275.5 18.5 277 20 280.5 20.5 C277 21 275.5 22.5 275 26 C274.5 22.5 273 21 269.5 20.5 C273 20 274.5 18.5 275 15Z"/><circle cx="269.5" cy="15.8" r="1.1"/><circle cx="280" cy="15.5" r="1"/><circle cx="269.5" cy="25.5" r="1"/></g>
<!-- dots -->
<g fill="#e0e0e0" stroke="none"><circle cx="358" cy="16" r="1.5"/><circle cx="358" cy="21" r="1.5"/><circle cx="358" cy="26" r="1.5"/></g>
<!-- screen icons -->
<g><circle cx="399.5" cy="17.5" r="4.3" fill="#d8d8d8"/><rect x="401" y="18.5" width="9.5" height="8.5" rx="1.5" fill="#2a2a2a" stroke="#d8d8d8" stroke-width="1.2"/><path d="M403.8 25.3 L405.8 20.5 L407.8 25.3 M404.5 23.8 H407" stroke="#d8d8d8" stroke-width=".9"/></g>
<g fill="#f2f2f2" stroke="none"><rect x="434.5" y="14" width="14.5" height="14.5" rx="1.5"/><g fill="#171717"><rect x="438.6" y="14" width="1.4" height="14.5"/><rect x="443.5" y="14" width="1.4" height="14.5"/><rect x="434.5" y="18.1" width="14.5" height="1.4"/><rect x="434.5" y="23" width="14.5" height="1.4"/><rect x="440" y="19.5" width="3.5" height="3.5"/></g></g>
<!-- disabled icons right -->
<g fill="#4c4c4c" stroke="none">
<rect x="1087" y="14" width="9" height="9" rx="2"/><circle cx="1096" cy="22" r="5.5"/>
<rect x="1112" y="14" width="9" height="9" rx="2"/><circle cx="1121" cy="22" r="5.5" fill="#2e2e2e" stroke="#4c4c4c" stroke-width="1.3"/>
<rect x="1138" y="14" width="9" height="9" rx="2" fill="none" stroke="#4c4c4c" stroke-width="1.3"/><circle cx="1147" cy="22" r="5" fill="none" stroke="#4c4c4c" stroke-width="1.3"/><circle cx="1144.5" cy="20.5" r="2.6"/>
<rect x="1163" y="14" width="9" height="9" rx="2"/><circle cx="1172" cy="22" r="5.5"/><circle cx="1169.5" cy="20" r="2.4" fill="#2e2e2e"/>
<rect x="1188" y="14" width="9" height="9" rx="2"/><circle cx="1197" cy="22" r="5.5"/><path d="M1192 18 h5 v5 h-5z" fill="#3a3a3a"/>
<path d="M1224 15 l6 3 l-2 4 l6 5 l-4 1 l-7 -6z"/><circle cx="1233" cy="17" r="2.5"/>
<path d="M1266 14 L1266 27 L1259 27Z M1268.5 14 L1268.5 27 L1275.5 27Z"/>
<rect x="1297" y="16" width="13" height="3" rx="1"/><rect x="1297" y="21.5" width="8" height="3" rx="1"/>
</g>
<g stroke="#444" stroke-width="1"><path d="M1213.5 10 V33 M1250.5 10 V33 M1286.500 10 V33 M1322.500 10 V33 M1408.500 10 V33"/></g>
<!-- bright icons -->
<g stroke="#d4d4d4" stroke-width="1.2" fill="none"><rect x="1334" y="15" width="9" height="9"/><path d="M1336.500 12.500 V15 M1331.500 17.500 H1334"/><circle cx="1344" cy="24" r="3.6" fill="#e8e8e8"/>
<path d="M1360 27 V21 H1366"/><circle cx="1368.500" cy="18" r="4.2" fill="#e8e8e8"/><rect x="1358.500" y="25.500" width="3" height="3" fill="#e8e8e8" stroke="none"/><rect x="1358.500" y="19.500" width="3" height="3" fill="#e8e8e8" stroke="none"/>
<rect x="1385" y="15" width="12" height="12"/><path d="M1388.500 23.500 L1393.500 18.500 V23.500Z" fill="#e8e8e8"/><g fill="#e8e8e8" stroke="none"><rect x="1383.500" y="13.500" width="3" height="3"/><rect x="1395.500" y="13.500" width="3" height="3"/><rect x="1383.500" y="25.500" width="3" height="3"/><rect x="1395.500" y="25.500" width="3" height="3"/></g>
</g>
<!-- magnet -->
<g transform="translate(1428.300 21.300) rotate(45)" stroke="#f2f2f2" stroke-width="2.300" stroke-linecap="butt"><path d="M-3.300 1.600 V-1 A3.300 3.300 0 0 1 3.300 -1 V1.600"/><path d="M-3.300 2.800 V4.600 M3.300 2.800 V4.600"/></g>
<path d="M1444 20 L1446 22.200 L1448 20" stroke="#d0d0d0" stroke-width="1.300"/>
<path d="M1557.500 20 L1559.500 22.200 L1561.500 20" stroke="#d0d0d0" stroke-width="1.300"/>
<circle cx="1596" cy="21.500" r="6.800" stroke="#3c8cf4" stroke-width="1.400"/>
<path d="M1593.800 19.700 A2.300 2.300 0 1 1 1596.300 22 V23.200 M1596.300 25.500 V25.600" stroke="#f0f0f0" stroke-width="1.500"/>
<!-- second bar icons -->
<path d="M70 62 L72.500 64.600 L76.600 59.600" stroke="#fff" stroke-width="1.600"/>
<path d="M153.500 55.500 V66.500 L156.300 64 L158.300 68.300 L160 67.500 L158 63.300 H161.500Z" stroke="#e8e8e8" stroke-width="1.100" fill="#1b1b1b"/>
<g stroke="#cfcfcf" stroke-width="1.200"><rect x="176" y="55.500" width="8.500" height="8.500" rx="2"/><circle cx="184.500" cy="64" r="4.600"/>
<rect x="201.500" y="57.500" width="11" height="10" rx="1.500"/><path d="M203.500 57.500 V55.500 H213.500 V64.500"/></g>
<g stroke="#cfcfcf" stroke-width="1" stroke-dasharray="1.500 1.200" stroke-linecap="butt"><rect x="458" y="56" width="12" height="12"/><path d="M462 56 V68 M466 56 V68 M458 60 H470 M458 64 H470" /></g>
<g transform="translate(502 61.500)" fill="#dedede" stroke="none"><path d="M-1.300 -6.500 h2.600 l.4 1.800 l1.500 .7 l1.600 -1 l1.800 1.800 l-1 1.600 l.7 1.500 l1.800 .4 v2.600 l-1.800 .4 l-.7 1.500 l1 1.600 l-1.800 1.800 l-1.600 -1 l-1.500 .7 l-.4 1.800 h-2.600 l-.4 -1.800 l-1.500 -.7 l-1.600 1 l-1.800 -1.800 l1 -1.600 l-.7 -1.500 l-1.800 -.4 v-2.600 l1.800 -.4 l.7 -1.500 l-1 -1.600 l1.800 -1.800 l1.600 1 l1.500 -.7z M0 -2.500 a2.500 2.500 0 1 0 0.010 0z" fill-rule="evenodd"/></g>
</svg>

<div class="abs" style="left:1.5px;top:83.5px;width:27.5px;height:27.5px;border-radius:6px;background:#1b1b1b;border:1px solid #3c3c3c"></div>
<div class="abs" style="left:0;top:642px;width:31px;height:12px;border-radius:2px;background:#4c4c4c"></div>
<div class="abs" style="left:0;top:572px;width:34px;height:1px;background:#242424"></div>
<svg class="abs" style="left:0;top:0" width="40" height="906" viewBox="0 0 40 906" fill="none" stroke="#e0e0e0" stroke-width="1.300" stroke-linecap="round" stroke-linejoin="round">
<path d="M11 90.0 V102.8 L14.200 100.2 L16.500 105.6 L18.800 104.5 L16.600 99.5 H21Z" stroke="#f4f4f4" stroke-width="1.400"/>
<rect x="10.500" y="124.0" width="11" height="11" stroke-dasharray="2 1.600" stroke-linecap="butt"/><rect x="13" y="126.5" width="6" height="6" fill="#e0e0e0"/><path d="M8 122.5 H12 M10 120.5 V124.5"/>
<path d="M10 152.5 L21.500 159.5 L13.500 166.0 Z"/>
<path d="M25.5 166.5 V170.0 H22.0" stroke="#c0c0c0" stroke-width="1.100"/>
<path d="M9 183.0 H23 M10.500 181.5 V199.0 M10.500 197.0 C16 195.0 19 191.0 22.500 184.0"/><circle cx="17" cy="192.0" r="2.200"/>
<path d="M24.0 196.5 V200.0 H20.5" stroke="#c0c0c0" stroke-width="1.100"/>
<circle cx="15.500" cy="220.0" r="8" stroke-dasharray="2.600 1.800" stroke-linecap="butt"/><circle cx="15.500" cy="220.0" r="4.200" fill="#e0e0e0"/><circle cx="22" cy="214.5" r="2" fill="#e0e0e0"/>
<path d="M8.500 258.0 L11 249.0 L17.500 244.0 L22.500 249.0 L19 255.5 Z M8.500 258.0 L14 252.5"/><circle cx="15" cy="251.5" r="1.300"/><path d="M16.500 242.5 L23 249.0"/>
<path d="M9 289.0 L10.500 284.0 L19.500 275.0 L23 278.5 L14 287.5 Z M17.500 277.0 L21 280.5"/>
<path d="M25.5 287.5 V291.0 H22.0" stroke="#c0c0c0" stroke-width="1.100"/>
<path d="M8 311.0 C12 305.0 14 307.0 16 310.0 S20 313.0 24 307.0 M8 317.0 C12 311.0 14 313.0 16 316.0 S20 319.0 24 313.0 M21 304.0 L10 320.0" stroke-width="1.600"/>
<path d="M9 346.5 L19 335.5 L22.500 339.0 L12.500 350.0 Z" fill="#a0a0a0" stroke="#c8c8c8"/><circle cx="10" cy="349.0" r="1.500" fill="#e0e0e0"/><circle cx="21.500" cy="336.0" r="1.500" fill="#e0e0e0"/>
<path d="M25.5 349.0 V352.5 H22.0" stroke="#c0c0c0" stroke-width="1.100"/>
<rect x="8.500" y="365.0" width="14" height="13" rx="1" fill="#1e2422" stroke="#d8d8d8" stroke-width="1.300"/>
<path d="M26.0 379.5 V383.0 H22.5" stroke="#c0c0c0" stroke-width="1.100"/>
<circle cx="15" cy="402.5" r="7" stroke-dasharray="2 1.600" stroke-linecap="butt"/><rect x="13" y="402.0" width="9" height="9" rx="1" fill="#e0e0e0" stroke="none"/>
<path d="M25.0 410.5 V414.0 H21.5" stroke="#c0c0c0" stroke-width="1.100"/>
<path d="M10 428.5 H22 M16 428.5 V439.0 M13.500 439.0 H18.500" stroke-width="1.700"/><rect x="8.500" y="425.0" width="2.500" height="2.500"/><rect x="20.500" y="425.0" width="2.500" height="2.500"/><rect x="8.500" y="438.0" width="2.500" height="2.500"/>
<path d="M25.0 440.5 V444.0 H21.5" stroke="#c0c0c0" stroke-width="1.100"/>
<rect x="8" y="457.5" width="15.500" height="13" rx="2"/><path d="M8.500 468.0 L12.500 464.0 L15.500 467.0 L18.500 464.5 L23 468.5"/><circle cx="19" cy="461.5" r="1.300"/>
<path d="M8 489.0 H13 M10.500 486.5 V491.5 M18 499.0 H23 M20.500 496.5 V501.5 M10.500 499.0 L20.500 489.0"/><circle cx="10.500" cy="499.5" r="1.500"/><circle cx="20.500" cy="488.5" r="1.500"/>
<path d="M8 528.0 L19 517.0 L23.500 521.5 L12.500 532.5 Z M12 524.0 l1.500 1.500 M14.500 521.5 l1.500 1.500 M17 519.0 l1.500 1.500"/>
<path d="M25.5 531.5 V535.0 H22.0" stroke="#c0c0c0" stroke-width="1.100"/>
<g transform="translate(15.500 554.7) rotate(45)"><path d="M-2 -1 V8 L0 10.500 L2 8 V-1"/><path d="M-3.800 -1 H3.800"/><path d="M-2 -1 V-6 A2 2 0 0 1 2 -6 V-1" fill="#e0e0e0"/></g>
<path d="M25.5 562.2 V565.7 H22.0" stroke="#c0c0c0" stroke-width="1.100"/>
<path d="M11 594.7 V587.7 A1.300 1.300 0 0 1 13.600 587.7 V591.7 V585.7 A1.300 1.300 0 0 1 16.200 585.7 V591.7 V586.2 A1.300 1.300 0 0 1 18.800 586.2 V591.7 V588.7 A1.300 1.300 0 0 1 21.400 588.7 V595.7 C21.400 599.7 19 601.7 16 601.7 C13 601.7 11 598.7 9 595.7 C7.500 593.7 9.500 592.7 11 594.7"/>
<circle cx="17.500" cy="620.5" r="5.500"/><path d="M13.500 624.5 L8.500 630.0" stroke-width="2.200"/>
<circle cx="10.500" cy="648" r="1.300" fill="#e8e8e8" stroke="none"/><circle cx="15.500" cy="648" r="1.300" fill="#e8e8e8" stroke="none"/><circle cx="20.500" cy="648" r="1.300" fill="#e8e8e8" stroke="none"/>
<circle cx="15.500" cy="672" r="10" stroke="#fafafa" stroke-width="3.600"/><circle cx="15.700" cy="681" r="13" fill="#e51fb0" stroke="none"/>
<path d="M11 698.500 C13 701 18 701 20 698.500" stroke="#8a6a50" stroke-width="1.200"/>
</svg>
<div class="abs" style="left:1396px;top:78px;width:226px;height:828px">
<div class="abs" style="left:1.0px;top:0.0px;width:225.0px;height:23.5px;background:#252525;"></div>
<div class="abs" style="left:7.5px;top:4.5px;width:3.0px;height:14.0px;background:#585858;border-radius:1.5px"></div>
<div class="abs" style="left:17.0px;top:4.0px;width:37.5px;height:15.5px;background:#474747;border-radius:3px"></div>
<div class="t b" style="left:22.0px;top:7.2px;font-size:8.8px;color:#ffffff;">Colour</div>
<div class="t" style="left:58.8px;top:7.2px;font-size:8.8px;color:#b4b4b4;">Swatches</div>
<div class="t" style="left:109.0px;top:7.2px;font-size:8.8px;color:#b4b4b4;">Stroke</div>
<div class="t" style="left:146.6px;top:7.2px;font-size:8.8px;color:#b4b4b4;">Appearance</div>
<div class="t b" style="left:9.0px;top:135.0px;font-size:8.8px;color:#dadada;">H: 319</div>
<div class="t b" style="left:9.0px;top:146.0px;font-size:8.8px;color:#dadada;">S: 76</div>
<div class="t b" style="left:9.0px;top:157.0px;font-size:8.8px;color:#dadada;">L: 50</div>
<div class="t b" style="left:9.0px;top:172.5px;font-size:8.8px;color:#dadada;">Opacity</div>
<div class="t b" style="left:168.5px;top:163.5px;font-size:8.8px;color:#dadada;">#:</div>
<div class="abs" style="left:178.0px;top:161.5px;width:42.0px;height:13.5px;background:#2a2a2a;border-radius:2px"></div>
<div class="t b" style="left:181.0px;top:163.8px;font-size:8.8px;color:#f0f0f0;">E120A5</div>
<div class="abs" style="left:167.5px;top:185.0px;width:36.5px;height:13.5px;background:#2a2a2a;border-radius:2px"></div>
<div class="t b" style="left:170.5px;top:187.3px;font-size:8.8px;color:#f0f0f0;">100 %</div>
<div class="abs" style="left:188.7px;top:46.0px;width:14.6px;height:15.0px;background:#000000;"></div>
<div class="abs" style="left:203.5px;top:46.0px;width:14.6px;height:15.0px;background:#ffffff;"></div>
<div class="abs" style="left:188.7px;top:61.2px;width:14.6px;height:15.0px;background:#ffffff;"></div>
<div class="abs" style="left:203.5px;top:61.2px;width:14.6px;height:15.0px;background:#e230b4;"></div>
<div class="abs" style="left:188.7px;top:76.3px;width:14.6px;height:15.0px;background:#ff5a0c;"></div>
<div class="abs" style="left:203.5px;top:76.3px;width:14.6px;height:15.0px;background:#ffb40c;"></div>
<div class="abs" style="left:188.7px;top:91.4px;width:14.6px;height:15.0px;background:#ffb230;"></div>
<div class="abs" style="left:203.5px;top:91.4px;width:14.6px;height:15.0px;background:#f01410;"></div>
<div class="abs" style="left:188.7px;top:106.6px;width:14.6px;height:15.0px;background:#a6f032;"></div>
<div class="abs" style="left:203.5px;top:106.6px;width:14.6px;height:15.0px;background:#f2d20e;"></div>
<div class="abs" style="left:188.7px;top:121.8px;width:14.6px;height:15.0px;background:#d6f88e;"></div>
<div class="abs" style="left:203.5px;top:121.8px;width:14.6px;height:15.0px;background:#eef8ec;"></div>
<div class="abs" style="left:1.0px;top:205.5px;width:225.0px;height:22.5px;background:#252525;"></div>
<div class="abs" style="left:7.5px;top:210.0px;width:3.0px;height:14.0px;background:#585858;border-radius:1.5px"></div>
<div class="abs" style="left:17.0px;top:209.2px;width:36.5px;height:15.8px;background:#474747;border-radius:3px"></div>
<div class="t b" style="left:22.0px;top:212.6px;font-size:8.8px;color:#ffffff;">Layers</div>
<div class="t" style="left:59.0px;top:212.6px;font-size:8.8px;color:#b4b4b4;">Path Brushes</div>
<div class="t" style="left:123.3px;top:212.6px;font-size:8.8px;color:#b4b4b4;">Quick FX</div>
<div class="t" style="left:170.6px;top:212.6px;font-size:8.8px;color:#b4b4b4;">Styles</div>
<div class="t b" style="left:6.0px;top:239.0px;font-size:8.8px;color:#dcdcdc;">Opacity:</div>
<div class="t" style="left:45.0px;top:239.0px;font-size:8.8px;color:#6e6e6e;">100 %</div>
<div class="t" style="left:96.5px;top:239.0px;font-size:8.8px;color:#6e6e6e;">Normal</div>
<div class="abs" style="left:1.0px;top:258.3px;width:225.0px;height:30.4px;background:#1c4ea4;"></div>
<div class="t b" style="left:55.8px;top:268.8px;font-size:8.6px;color:#ffffff;">Artboard1</div>
<div class="abs" style="left:1.0px;top:289.7px;width:197.0px;height:30.4px;background:#2c2c2c;"></div>
<div class="abs" style="left:198.0px;top:289.7px;width:27.0px;height:30.4px;background:#d070e8;"></div>
<div class="abs" style="left:23.0px;top:289.7px;width:32.0px;height:30.4px;background:#222222;"></div>
<div class="t b" style="left:63.0px;top:300.5px;font-size:8.6px;color:#f0f0f0;">Face (makeup)</div>
<div class="abs" style="left:1.0px;top:321.0px;width:197.0px;height:30.4px;background:#2c2c2c;"></div>
<div class="abs" style="left:198.0px;top:321.0px;width:27.0px;height:30.4px;background:#46d868;"></div>
<div class="abs" style="left:23.0px;top:321.0px;width:32.0px;height:30.4px;background:#222222;"></div>
<div class="t b" style="left:63.0px;top:331.8px;font-size:8.6px;color:#f0f0f0;">Stars</div>
<div class="abs" style="left:1.0px;top:352.4px;width:197.0px;height:30.4px;background:#2c2c2c;"></div>
<div class="abs" style="left:198.0px;top:352.4px;width:27.0px;height:30.4px;background:#ffb22e;"></div>
<div class="abs" style="left:23.0px;top:352.4px;width:32.0px;height:30.4px;background:#222222;"></div>
<div class="t b" style="left:63.0px;top:363.2px;font-size:8.6px;color:#f0f0f0;">Flower head piece (front)</div>
<div class="abs" style="left:1.0px;top:383.7px;width:197.0px;height:30.4px;background:#2c2c2c;"></div>
<div class="abs" style="left:198.0px;top:383.7px;width:27.0px;height:30.4px;background:#ffb22e;"></div>
<div class="abs" style="left:23.0px;top:383.7px;width:32.0px;height:30.4px;background:#222222;"></div>
<div class="t b" style="left:63.0px;top:394.5px;font-size:8.6px;color:#f0f0f0;">Flower cloth (front)</div>
<div class="abs" style="left:1.0px;top:415.1px;width:197.0px;height:30.4px;background:#2c2c2c;"></div>
<div class="abs" style="left:198.0px;top:415.1px;width:27.0px;height:30.4px;background:#1a98fa;"></div>
<div class="abs" style="left:23.0px;top:415.1px;width:32.0px;height:30.4px;background:#222222;"></div>
<div class="t b" style="left:63.0px;top:425.9px;font-size:8.6px;color:#f0f0f0;">Portrait</div>
<div class="abs" style="left:1.0px;top:446.4px;width:197.0px;height:30.4px;background:#2c2c2c;"></div>
<div class="abs" style="left:198.0px;top:446.4px;width:27.0px;height:30.4px;background:#1a98fa;"></div>
<div class="abs" style="left:32.0px;top:446.4px;width:32.0px;height:30.4px;background:#242424;"></div>
<div class="t b" style="left:71.0px;top:457.2px;font-size:8.6px;color:#5e5e5e;">Pixel</div>
<div class="abs" style="left:1.0px;top:477.8px;width:197.0px;height:30.4px;background:#2c2c2c;"></div>
<div class="abs" style="left:198.0px;top:477.8px;width:27.0px;height:30.4px;background:#1a98fa;"></div>
<div class="abs" style="left:32.0px;top:477.8px;width:32.0px;height:30.4px;background:#303030;"></div>
<div class="t b" style="left:71.0px;top:488.5px;font-size:8.6px;color:#f0f0f0;">Colour Balance Adjustmen</div>
<div class="abs" style="left:1.0px;top:509.1px;width:197.0px;height:30.4px;background:#2c2c2c;"></div>
<div class="abs" style="left:198.0px;top:509.1px;width:27.0px;height:30.4px;background:#1a98fa;"></div>
<div class="abs" style="left:32.0px;top:509.1px;width:32.0px;height:30.4px;background:#303030;"></div>
<div class="t b" style="left:71.0px;top:519.9px;font-size:8.6px;color:#f0f0f0;">Colour Balance Adjustmen</div>
<div class="abs" style="left:1.0px;top:540.5px;width:197.0px;height:30.4px;background:#2c2c2c;"></div>
<div class="abs" style="left:198.0px;top:540.5px;width:27.0px;height:30.4px;background:#1a98fa;"></div>
<div class="abs" style="left:32.0px;top:540.5px;width:32.0px;height:30.4px;background:#303030;"></div>
<div class="t b" style="left:71.0px;top:551.2px;font-size:8.6px;color:#f0f0f0;">Curves Adjustment</div>
<div class="abs" style="left:1.0px;top:571.8px;width:197.0px;height:28.0px;background:#2c2c2c;"></div>
<div class="abs" style="left:198.0px;top:571.8px;width:27.0px;height:28.0px;background:#1a98fa;"></div>
<div class="abs" style="left:32.0px;top:571.8px;width:32.0px;height:28.0px;background:#242424;"></div>
<div class="t b" style="left:71.0px;top:582.6px;font-size:8.6px;color:#5e5e5e;">Black-and-White Portrai...</div>
<div class="abs" style="left:1.0px;top:599.0px;width:225.0px;height:31.0px;background:#353535;"></div>
<div class="abs" style="left:1.0px;top:630.0px;width:225.0px;height:22.5px;background:#252525;"></div>
<div class="abs" style="left:7.5px;top:634.5px;width:3.0px;height:14.0px;background:#585858;border-radius:1.5px"></div>
<div class="t" style="left:22.0px;top:636.8px;font-size:8.8px;color:#b4b4b4;">Transform</div>
<div class="abs" style="left:69.0px;top:633.5px;width:49.0px;height:15.8px;background:#474747;border-radius:3px"></div>
<div class="t b" style="left:73.5px;top:636.8px;font-size:8.8px;color:#ffffff;">Navigator</div>
<div class="t" style="left:123.0px;top:636.8px;font-size:8.8px;color:#b4b4b4;">History</div>
<div class="abs" style="left:10.5px;top:662.5px;width:11.5px;height:12.5px;background:#2a2a2a;border-radius:2px"></div>
<div class="abs" style="left:28.0px;top:665.0px;width:131.0px;height:6.5px;background:#262626;border-radius:3px"></div>
<div class="abs" style="left:28.5px;top:665.6px;width:23.0px;height:5.3px;background:#1a7af8;border-radius:2.5px"></div>
<div class="abs" style="left:51.0px;top:664.0px;width:3.6px;height:8.6px;background:#e8e8e8;border-radius:1.5px"></div>
<div class="abs" style="left:164.5px;top:662.5px;width:11.5px;height:12.5px;background:#2a2a2a;border-radius:2px"></div>
<div class="abs" style="left:182.0px;top:661.5px;width:36.0px;height:14.5px;background:#2a2a2a;border-radius:2px"></div>
<div class="t b" style="left:186.0px;top:664.6px;font-size:8.8px;color:#f0f0f0;">50 %</div>
<div class="abs" style="left:1.0px;top:684.7px;width:225.0px;height:19.2px;background:#4b4b4b;"></div>
<div class="t b" style="left:4.8px;top:689.6px;font-size:8.8px;color:#f4f4f4;">View Point 1</div>
<div class="abs" style="left:1.0px;top:815.8px;width:225.0px;height:12.2px;background:#2b2b2b;"></div>
<div class="t b" style="left:6.0px;top:819.6px;font-size:8.8px;color:#e8e8e8;">Inioluwa Alabi (50.0%)</div>
<div class="t b" style="left:213.0px;top:818.5px;font-size:10px;color:#e8e8e8;">*</div>
</div><div class="abs" style="left:1448px;top:123.5px;width:124px;height:124px;border-radius:50%;background:conic-gradient(from 90deg,#ff0000,#ffff00,#00ff00,#00ffff,#0000ff,#ff00ff,#ff0000);-webkit-mask:radial-gradient(circle,transparent 49.5px,#000 50.5px,#000 61.5px,transparent 62.3px);mask:radial-gradient(circle,transparent 49.5px,#000 50.5px,#000 61.5px,transparent 62.3px)"></div>
<svg class="abs" style="left:0;top:0" width="1622" height="906" viewBox="0 0 1622 906" fill="none" stroke-linecap="round" stroke-linejoin="round">
<defs>
<linearGradient id="tw" gradientUnits="userSpaceOnUse" x1="1519.5" y1="234.6" x2="1505.2" y2="161.0"><stop offset="0" stop-color="#fff"/><stop offset="1" stop-color="#fff" stop-opacity="0"/></linearGradient>
<linearGradient id="tk" gradientUnits="userSpaceOnUse" x1="1462.7" y1="169.2" x2="1533.6" y2="193.6"><stop offset="0" stop-color="#000"/><stop offset="1" stop-color="#000" stop-opacity="0"/></linearGradient>
<linearGradient id="opg" x1="0" x2="1" y1="0" y2="0"><stop offset="0" stop-color="#fff"/><stop offset=".25" stop-color="#fff" stop-opacity=".8"/><stop offset="1" stop-color="#fff" stop-opacity="0"/></linearGradient>
<pattern id="chk" x="1421.7" y="265.5" width="8.6" height="8.6" patternUnits="userSpaceOnUse"><rect width="8.6" height="8.6" fill="#3a3a3a"/><rect width="4.3" height="4.3" fill="#6e6e6e"/><rect x="4.3" y="4.3" width="4.3" height="4.3" fill="#6e6e6e"/></pattern>
<clipPath id="navc"><rect x="1448" y="789.6" width="123.7" height="100.2"/></clipPath>
<linearGradient id="navbg" x1="0" y1="792.5" x2="0" y2="889.8" gradientUnits="userSpaceOnUse"><stop offset="0" stop-color="#fb0070"/><stop offset=".08" stop-color="#f0058c"/><stop offset=".22" stop-color="#dc22da"/><stop offset=".29" stop-color="#8a58ec"/><stop offset=".325" stop-color="#20b0f6"/><stop offset=".39" stop-color="#eef8ec"/><stop offset=".45" stop-color="#fafde0"/><stop offset=".5" stop-color="#a4f636"/><stop offset=".6" stop-color="#a8f024"/><stop offset=".66" stop-color="#e8d410"/><stop offset=".72" stop-color="#ffc800"/><stop offset="1" stop-color="#ffc400"/></linearGradient>
</defs>
<polygon points="1547.7,152.7 1519.5,234.6 1462.7,169.2" fill="#f312ac"/><polygon points="1547.7,152.7 1519.5,234.6 1462.7,169.2" fill="url(#tw)"/><polygon points="1547.7,152.7 1519.5,234.6 1462.7,169.2" fill="url(#tk)"/>
<circle cx="1551.6" cy="148.6" r="4.6" fill="#ee1aa6" stroke="#f4f4f4" stroke-width="1.5"/>
<circle cx="1533.7" cy="164.5" r="4" fill="#d850a8" stroke="#f4f4f4" stroke-width="1.4"/>
<circle cx="1416.2" cy="120.3" r="8.8" stroke="#fafafa" stroke-width="3.2"/>
<circle cx="1426" cy="129" r="10.3" fill="#e51fb0"/>
<circle cx="1408.8" cy="136.8" r="4" fill="#e8e8e8"/><path d="M1406 139.600 L1411.600 134" stroke="#d03030" stroke-width="1.200"/>
<path d="M1430.500 109.500 C1434.500 110 1437 112.500 1437.500 116.500 M1430.500 109.500 l2.200 -1.500 M1430.500 109.500 l1.800 2 M1437.500 116.500 l-2 -1.500 M1437.500 116.500 l1.600 -2" stroke="#8a8a8a" stroke-width="1"/>
<g stroke="#f0f0f0" stroke-width="1.200" transform="translate(1452.500 116.500) rotate(45)"><path d="M-2 -1 V8 L0 10.500 L2 8 V-1"/><path d="M-3.800 -1 H3.800 M-2.500 -3 H2.500"/><path d="M-2 -3 V-6.500 A2 2 0 0 1 2 -6.500 V-3" /></g>
<circle cx="1468" cy="116" r="6" fill="#000"/>
<rect x="1600.500" y="83.5" width="12.500" height="12.500" rx="2.500" stroke="#a8a8a8" stroke-width="1"/><path d="M1603.600 88.0 L1606.700 91.8 L1609.800 88.0" stroke="#e8e8e8" stroke-width="1.400"/>
<rect x="1600.500" y="288.5" width="12.500" height="12.500" rx="2.500" stroke="#a8a8a8" stroke-width="1"/><path d="M1603.600 293.0 L1606.700 296.8 L1609.800 293.0" stroke="#e8e8e8" stroke-width="1.400"/>
<rect x="1600.500" y="712.5" width="12.500" height="12.500" rx="2.500" stroke="#a8a8a8" stroke-width="1"/><path d="M1603.600 717.0 L1606.700 720.8 L1609.800 717.0" stroke="#e8e8e8" stroke-width="1.400"/>
<circle cx="1411.500" cy="270" r="5.200" fill="#e51fb0"/>
<rect x="1421.700" y="265.500" width="135" height="8.600" rx="4.300" fill="url(#chk)"/><rect x="1421.700" y="265.500" width="135" height="8.600" rx="4.300" fill="url(#opg)"/>
<circle cx="1552.400" cy="269.600" r="4.200" fill="#202020" stroke="#f4f4f4" stroke-width="1.400"/>
<path d="M1605 267.800 L1608 271 L1611 267.800" stroke="#e0e0e0" stroke-width="1.400"/>
<path d="M1478.800 320 L1481 322.300 L1483.200 320" stroke="#8a8a8a" stroke-width="1.200"/>
<path d="M1572 319.500 L1574 317.300 L1576 319.500 M1572 323 L1574 325.200 L1576 323" stroke="#8a8a8a" stroke-width="1.100"/>
<g transform="translate(1592.3 320.6) scale(.68)" fill="#e4e4e4"><path d="M-1.300 -6.500 h2.600 l.4 1.800 l1.500 .7 l1.600 -1 l1.800 1.800 l-1 1.600 l.7 1.500 l1.800 .4 v2.600 l-1.800 .4 l-.7 1.500 l1 1.600 l-1.800 1.800 l-1.600 -1 l-1.500 .7 l-.4 1.800 h-2.600 l-.4 -1.800 l-1.500 -.7 l-1.600 1 l-1.800 -1.800 l1 -1.600 l-.7 -1.500 l-1.800 -.4 v-2.600 l1.800 -.4 l.7 -1.500 l-1 -1.600 l1.800 -1.800 l1.600 1 l1.500 -.7z M0 -2.500 a2.500 2.500 0 1 0 0.010 0z" fill-rule="evenodd"/></g>
<rect x="1605.300" y="320.500" width="6.400" height="5.200" rx="1" fill="#d8d8d8"/><path d="M1606.500 320.500 V318.500 A2 2 0 0 1 1610.500 318.500 V320.500" stroke="#d8d8d8" stroke-width="1.100"/>
<g opacity="1"><path d="M1603.200 351.3 C1605 348.3 1609 348.3 1610.800 351.3 C1609 354.3 1605 354.3 1603.200 351.3Z" fill="#ffffff"/><circle cx="1607" cy="351.3" r="1.400" fill="#1c4ea4"/></g>
<g opacity="0.9"><path d="M1603.200 382.7 C1605 379.7 1609 379.7 1610.800 382.7 C1609 385.7 1605 385.7 1603.200 382.7Z" fill="#f0c8f8"/><circle cx="1607" cy="382.7" r="1.400" fill="#d070e8"/></g>
<g opacity="0.9"><path d="M1603.200 414.0 C1605 411.0 1609 411.0 1610.800 414.0 C1609 417.0 1605 417.0 1603.200 414.0Z" fill="#9af0a8"/><circle cx="1607" cy="414.0" r="1.400" fill="#46d868"/></g>
<g opacity="0.9"><path d="M1603.200 445.4 C1605 442.4 1609 442.4 1610.800 445.4 C1609 448.4 1605 448.4 1603.200 445.4Z" fill="#ffd890"/><circle cx="1607" cy="445.4" r="1.400" fill="#ffb22e"/></g>
<g opacity="0.9"><path d="M1603.200 476.7 C1605 473.7 1609 473.7 1610.800 476.7 C1609 479.7 1605 479.7 1603.200 476.7Z" fill="#ffd890"/><circle cx="1607" cy="476.7" r="1.400" fill="#ffb22e"/></g>
<g opacity="1"><path d="M1603.200 508.1 C1605 505.1 1609 505.1 1610.800 508.1 C1609 511.1 1605 511.1 1603.200 508.1Z" fill="#ffffff"/><circle cx="1607" cy="508.1" r="1.400" fill="#1a98fa"/></g>
<g opacity="1"><path d="M1603.200 539.4 C1605 536.4 1609 536.4 1610.800 539.4 C1609 542.4 1605 542.4 1603.200 539.4Z" fill="#ffffff"/><circle cx="1607" cy="539.4" r="1.400" fill="#1a98fa"/></g>
<g opacity="1"><path d="M1603.200 570.8 C1605 567.8 1609 567.8 1610.800 570.8 C1609 573.8 1605 573.8 1603.200 570.8Z" fill="#ffffff"/><circle cx="1607" cy="570.8" r="1.400" fill="#1a98fa"/></g>
<g opacity="1"><path d="M1603.200 602.1 C1605 599.1 1609 599.1 1610.800 602.1 C1609 605.1 1605 605.1 1603.200 602.1Z" fill="#ffffff"/><circle cx="1607" cy="602.1" r="1.400" fill="#1a98fa"/></g>
<g opacity="1"><path d="M1603.200 633.5 C1605 630.5 1609 630.5 1610.800 633.5 C1609 636.5 1605 636.5 1603.200 633.5Z" fill="#ffffff"/><circle cx="1607" cy="633.5" r="1.400" fill="#1a98fa"/></g>
<g opacity="1"><path d="M1603.200 664.8 C1605 661.8 1609 661.8 1610.800 664.8 C1609 667.8 1605 667.8 1603.200 664.8Z" fill="#ffffff"/><circle cx="1607" cy="664.8" r="1.400" fill="#1a98fa"/></g>
<path d="M1410.300 379.9 L1413 382.7 L1410.300 385.5" stroke="#e8e8e8" stroke-width="1.400"/>
<path d="M1410.300 411.2 L1413 414.0 L1410.300 416.8" stroke="#e8e8e8" stroke-width="1.400"/>
<path d="M1410.300 442.6 L1413 445.4 L1410.300 448.2" stroke="#e8e8e8" stroke-width="1.400"/>
<path d="M1410.300 473.9 L1413 476.7 L1410.300 479.5" stroke="#e8e8e8" stroke-width="1.400"/>
<path d="M1409.200 506.8 L1412 509.6 L1414.800 506.8" stroke="#e8e8e8" stroke-width="1.400"/>
<path d="M1401.700 357.200 L1404.200 359.700 L1406.700 357.200" stroke="#e8e8e8" stroke-width="1.300"/>
<path d="M1400.500 341 V349 M1403.500 341 V349 M1406.500 341 V349 M1399.500 343 H1408 M1399.500 346.500 H1408" stroke="#4a78c8" stroke-width=".8"/>
<path d="M1416.500 669 L1419 671.500 L1421.500 669" stroke="#e8e8e8" stroke-width="1.300"/>
<circle cx="1419" cy="570.8" r="2.700" fill="#c0c0c0"/><path d="M1419 568.0 A2.700 2.700 0 0 1 1419 573.5" fill="#555"/>
<circle cx="1419" cy="602.1" r="2.700" fill="#c0c0c0"/><path d="M1419 599.4 A2.700 2.700 0 0 1 1419 604.8" fill="#555"/>
<circle cx="1419" cy="633.5" r="2.700" fill="#c0c0c0"/><path d="M1419 630.8 A2.700 2.700 0 0 1 1419 636.2" fill="#555"/>
<g fill="#9a9a9a"><rect x="1416.500" y="535.9" width="1.500" height="1.500"/><rect x="1419.500" y="535.9" width="1.500" height="1.500"/><rect x="1418" y="537.4" width="1.500" height="1.500"/><rect x="1416.500" y="538.9" width="1.500" height="1.500"/><rect x="1419.500" y="538.9" width="1.500" height="1.500"/><rect x="1418" y="540.4" width="1.500" height="1.500"/></g>
<rect x="1565.500" y="534.9" width="8.500" height="8.500" rx="1" stroke="#b0b0b0" stroke-width="1"/><text x="1567.300" y="541.4" font-size="6" font-family="Liberation Sans,sans-serif" fill="#b0b0b0" font-weight="bold">s</text>
<rect x="1416" y="653.8" width="6" height="7" rx="1" stroke="#b0b0b0" stroke-width=".9"/><circle cx="1419" cy="655.8" r="1" fill="#b0b0b0"/><path d="M1417.300 658.8 H1420.700" stroke="#b0b0b0" stroke-width=".9"/>
<circle cx="1437.300" cy="566.0" r="2" fill="#f0f0f0"/><path d="M1441.500 566.0 H1451" stroke="#f0f0f0" stroke-width="1"/><circle cx="1444.5" cy="566.0" r="1.200" fill="#f0f0f0"/>
<circle cx="1437.300" cy="570.8" r="2" fill="#f0f0f0"/><path d="M1441.500 570.8 H1451" stroke="#f0f0f0" stroke-width="1"/><circle cx="1445.2" cy="570.8" r="1.200" fill="#f0f0f0"/>
<circle cx="1437.300" cy="575.5" r="2" fill="#f0f0f0"/><path d="M1441.500 575.5 H1451" stroke="#f0f0f0" stroke-width="1"/><circle cx="1445.9" cy="575.5" r="1.200" fill="#f0f0f0"/>
<circle cx="1437.300" cy="597.4" r="2" fill="#f0f0f0"/><path d="M1441.500 597.4 H1451" stroke="#f0f0f0" stroke-width="1"/><circle cx="1444.5" cy="597.4" r="1.200" fill="#f0f0f0"/>
<circle cx="1437.300" cy="602.1" r="2" fill="#f0f0f0"/><path d="M1441.500 602.1 H1451" stroke="#f0f0f0" stroke-width="1"/><circle cx="1445.2" cy="602.1" r="1.200" fill="#f0f0f0"/>
<circle cx="1437.300" cy="606.8" r="2" fill="#f0f0f0"/><path d="M1441.500 606.8 H1451" stroke="#f0f0f0" stroke-width="1"/><circle cx="1445.9" cy="606.8" r="1.200" fill="#f0f0f0"/>
<rect x="1434.500" y="626.0" width="15.500" height="15" rx="1" stroke="#e8e8e8" stroke-width="1.200"/><path d="M1436.500 638.0 L1440 633.0 L1442.500 635.0 L1445 630.5 L1448.500 629.0" stroke="#e8e8e8" stroke-width="1.100"/>
<g stroke="#8a8a8a" stroke-width="1.200"><path d="M1412 686 H1404 V699 H1416 V692"/><path d="M1408.500 695 L1409.500 691.500 L1415.500 685.500 L1417.500 687.500 L1411.500 693.500Z"/></g>
<rect x="1448" y="685" width="13.500" height="13.500" rx="1.500" fill="#f0f0f0"/><text x="1449.200" y="695.300" font-size="8.800" font-weight="bold" font-family="Liberation Sans,sans-serif" fill="#2a2a2a" letter-spacing="-0.6">FX</text>
<rect x="1466.500" y="685" width="14.500" height="13.500" rx="1.500" fill="#f0f0f0"/><circle cx="1473.700" cy="691.700" r="4.300" fill="#303030"/>
<path d="M1487 685.500 H1497.500 L1494 691.800 L1497.500 698 H1487 L1490.500 691.800Z" fill="#f0f0f0"/>
<circle cx="1510.700" cy="691.800" r="6" stroke="#f0f0f0" stroke-width="1.300"/><path d="M1506.500 696 A6 6 0 0 1 1515 687.500Z" fill="#f0f0f0"/>
<rect x="1545" y="685.500" width="13" height="13" rx="1.500" stroke="#f0f0f0" stroke-width="1.200"/><rect x="1547.500" y="688" width="6" height="6" fill="#f0f0f0"/><circle cx="1553.500" cy="694" r="3" fill="#b0b0b0" stroke="#f0f0f0" stroke-width=".8"/>
<path d="M1564 687.500 H1569 L1570.500 689.500 H1576.500 V698 H1564Z" stroke="#e0e0e0" stroke-width="1.200"/>
<g fill="#f0f0f0">
<rect x="1581.7" y="685.0" width="2.700" height="2.700"/>
<rect x="1587.1" y="685.0" width="2.700" height="2.700"/>
<rect x="1592.5" y="685.0" width="2.700" height="2.700"/>
<rect x="1584.4" y="687.7" width="2.700" height="2.700"/>
<rect x="1589.8" y="687.7" width="2.700" height="2.700"/>
<rect x="1581.7" y="690.4" width="2.700" height="2.700"/>
<rect x="1587.1" y="690.4" width="2.700" height="2.700"/>
<rect x="1592.5" y="690.4" width="2.700" height="2.700"/>
<rect x="1584.4" y="693.1" width="2.700" height="2.700"/>
<rect x="1589.8" y="693.1" width="2.700" height="2.700"/>
<rect x="1581.7" y="695.8" width="2.700" height="2.700"/>
<rect x="1587.1" y="695.8" width="2.700" height="2.700"/>
<rect x="1592.5" y="695.8" width="2.700" height="2.700"/>
</g><g stroke="#e0e0e0" stroke-width="1.200"><path d="M1603 688.500 H1612 M1605.500 688.500 V686.500 H1609.500 V688.500 M1604 688.500 L1604.800 698.500 H1610.200 L1611 688.500 M1606.200 691 V696 M1608.800 691 V696"/></g>
<path d="M1409.500 746.700 H1415" stroke="#707070" stroke-width="1.200"/><path d="M1563.300 746.700 H1569.300 M1566.300 743.700 V749.700" stroke="#8a8a8a" stroke-width="1.200"/>
<path d="M1433.0 752.500 V755" stroke="#5a5a5a" stroke-width=".8"/>
<path d="M1448.5 752.500 V755" stroke="#5a5a5a" stroke-width=".8"/>
<path d="M1471.0 752.500 V755" stroke="#5a5a5a" stroke-width=".8"/>
<path d="M1478.0 752.500 V755" stroke="#5a5a5a" stroke-width=".8"/>
<path d="M1493.0 752.500 V755" stroke="#5a5a5a" stroke-width=".8"/>
<path d="M1506.0 752.500 V755" stroke="#5a5a5a" stroke-width=".8"/>
<path d="M1525.0 752.500 V755" stroke="#5a5a5a" stroke-width=".8"/>
<path d="M1533.0 752.500 V755" stroke="#5a5a5a" stroke-width=".8"/>
<path d="M1540.0 752.500 V755" stroke="#5a5a5a" stroke-width=".8"/>
<path d="M1612 768.500 L1614 766.300 L1616 768.500 M1612 775 L1614 777.200 L1616 775" stroke="#e0e0e0" stroke-width="1.100"/>
<g id="navthumb"><g clip-path="url(#navc)"><rect x="1448" y="789.600" width="123.700" height="100.200" fill="url(#navbg)"/>
<g transform="translate(1454 786.420) scale(0.078)"><use href="#artg"/></g>
<g filter="url(#b1)"><ellipse cx="1500" cy="880" rx="36" ry="22" fill="#ff4a8a"/><ellipse cx="1535" cy="872" rx="20" ry="18" fill="#f43aa6"/><ellipse cx="1480" cy="874" rx="14" ry="16" fill="#ff8a38"/><ellipse cx="1512" cy="866" rx="12" ry="10" fill="#ffae50"/><ellipse cx="1524" cy="886" rx="22" ry="10" fill="#ff5a78"/><ellipse cx="1475" cy="888" rx="12" ry="8" fill="#f04ab0"/></g>
<circle cx="1489.500" cy="881.500" r="4.300" fill="#fff"/><circle cx="1521" cy="881" r="3.200" fill="#fff"/><circle cx="1538" cy="860" r="4.300" fill="#fff"/>
</g></g>
<rect x="1456.800" y="792.500" width="106" height="64.400" stroke="#4a7a8a" stroke-width=".8" fill="#000" fill-opacity=".12"/>
<g transform="translate(1411.800 338) scale(0.2445 0.2565) translate(-1448 -789.600)"><use href="#navthumb"/></g>
<g filter="url(#b1)"><circle cx="1440" cy="376.7" r="3" fill="#d01818"/><circle cx="1426.500" cy="385.2" r="2.800" fill="#ffa818"/><circle cx="1447.500" cy="383.7" r="2.400" fill="#e010d0"/><path d="M1429 384.7 L1436 381.7" stroke="#a02050" stroke-width="1.500"/></g>
<circle cx="1423.0" cy="405.0" r="2.6" fill="#fff"/>
<circle cx="1430.0" cy="402.0" r="1.2" fill="#fff"/>
<circle cx="1447.0" cy="401.0" r="1.8" fill="#fff"/>
<circle cx="1445.0" cy="405.0" r="1" fill="#fff"/>
<circle cx="1426.0" cy="414.0" r="1.2" fill="#fff"/>
<circle cx="1448.0" cy="413.0" r="1.2" fill="#fff"/>
<circle cx="1443.0" cy="419.0" r="1.8" fill="#fff"/>
<circle cx="1427.0" cy="426.0" r="1.2" fill="#fff"/>
<circle cx="1438.0" cy="426.0" r="1" fill="#fff"/>
<g filter="url(#b1)"><ellipse cx="1434" cy="445.4" rx="14" ry="13" fill="#f4489c"/><ellipse cx="1427" cy="447.4" rx="7" ry="8" fill="#ff8a48"/><ellipse cx="1440" cy="443.4" rx="7" ry="7" fill="#f03aa8"/><ellipse cx="1430" cy="453.4" rx="6" ry="5" fill="#ff9a40"/><ellipse cx="1437" cy="437.4" rx="6" ry="5" fill="#f65ab0"/><ellipse cx="1443" cy="451.4" rx="4" ry="6" fill="#ff7a60"/><ellipse cx="1433" cy="442.4" rx="5" ry="4" fill="#f86a90"/></g>
<g filter="url(#b1)"><ellipse cx="1434" cy="476.7" rx="14" ry="13" fill="#f4489c"/><ellipse cx="1427" cy="478.7" rx="7" ry="8" fill="#ff8a48"/><ellipse cx="1440" cy="474.7" rx="7" ry="7" fill="#f03aa8"/><ellipse cx="1430" cy="484.7" rx="6" ry="5" fill="#ff9a40"/><ellipse cx="1437" cy="468.7" rx="6" ry="5" fill="#f65ab0"/><ellipse cx="1443" cy="482.7" rx="4" ry="6" fill="#ff7a60"/><ellipse cx="1433" cy="473.7" rx="5" ry="4" fill="#f86a90"/></g>
<g filter="url(#b1)"><ellipse cx="1435" cy="506.1" rx="4.500" ry="5" fill="#101014"/><ellipse cx="1433.500" cy="501.6" rx="3" ry="2" fill="#c01070"/><path d="M1430 514.0 L1434 509.1 L1440 509.1 L1442 514.0 Z" fill="#181818"/><rect x="1429" y="513.0" width="13" height="5" fill="#a8b4c8"/><circle cx="1431.500" cy="510.1" r="1.800" fill="#e8a020"/></g>
<g filter="url(#b1)"><ellipse cx="1443" cy="660.8" rx="6" ry="7" fill="#0c0c10"/><ellipse cx="1441" cy="654.3" rx="4" ry="2.500" fill="#b01060"/><circle cx="1441" cy="667.8" r="3" fill="#e8a020"/><path d="M1431 677.8 L1440 669.8 L1450 669.8 L1453 677.8 Z" fill="#a0a0a0"/></g>
</svg>
<div class="abs" style="left:36px;top:894px;width:70px;height:12px;background:#232323"></div>
<div class="t b" style="left:65px;top:897.2px;font-size:8.6px;color:#e8e8e8">1 of 1</div>
<div class="t" style="left:231.5px;top:897.6px;font-size:9.2px;color:#9a9a9a;letter-spacing:0"><b style="color:#f0f0f0">Drag</b> to marquee select. <b style="color:#f0f0f0">Click</b> an object to select it. <b style="color:#f0f0f0">^</b> during marquee select to toggle intersection behaviour.</div>
<svg class="abs" style="left:0;top:894px" width="300" height="12" viewBox="0 894 300 12" fill="#555"><path d="M12 899 v6 l-4 -3z M24 899 v6 l-4 -3z"/><path d="M120 898.500 v7 l5 -3.500z" fill="#b0b0b0"/><path d="M137 899 v6 l4 -3z M150 899 h6 v6 h-6z"/><rect x="183" y="897" width="7" height="8" fill="none" stroke="#9a9a9a"/><rect x="199" y="897" width="8" height="8" fill="none" stroke="#6a6a6a"/></svg>

</body></html>
